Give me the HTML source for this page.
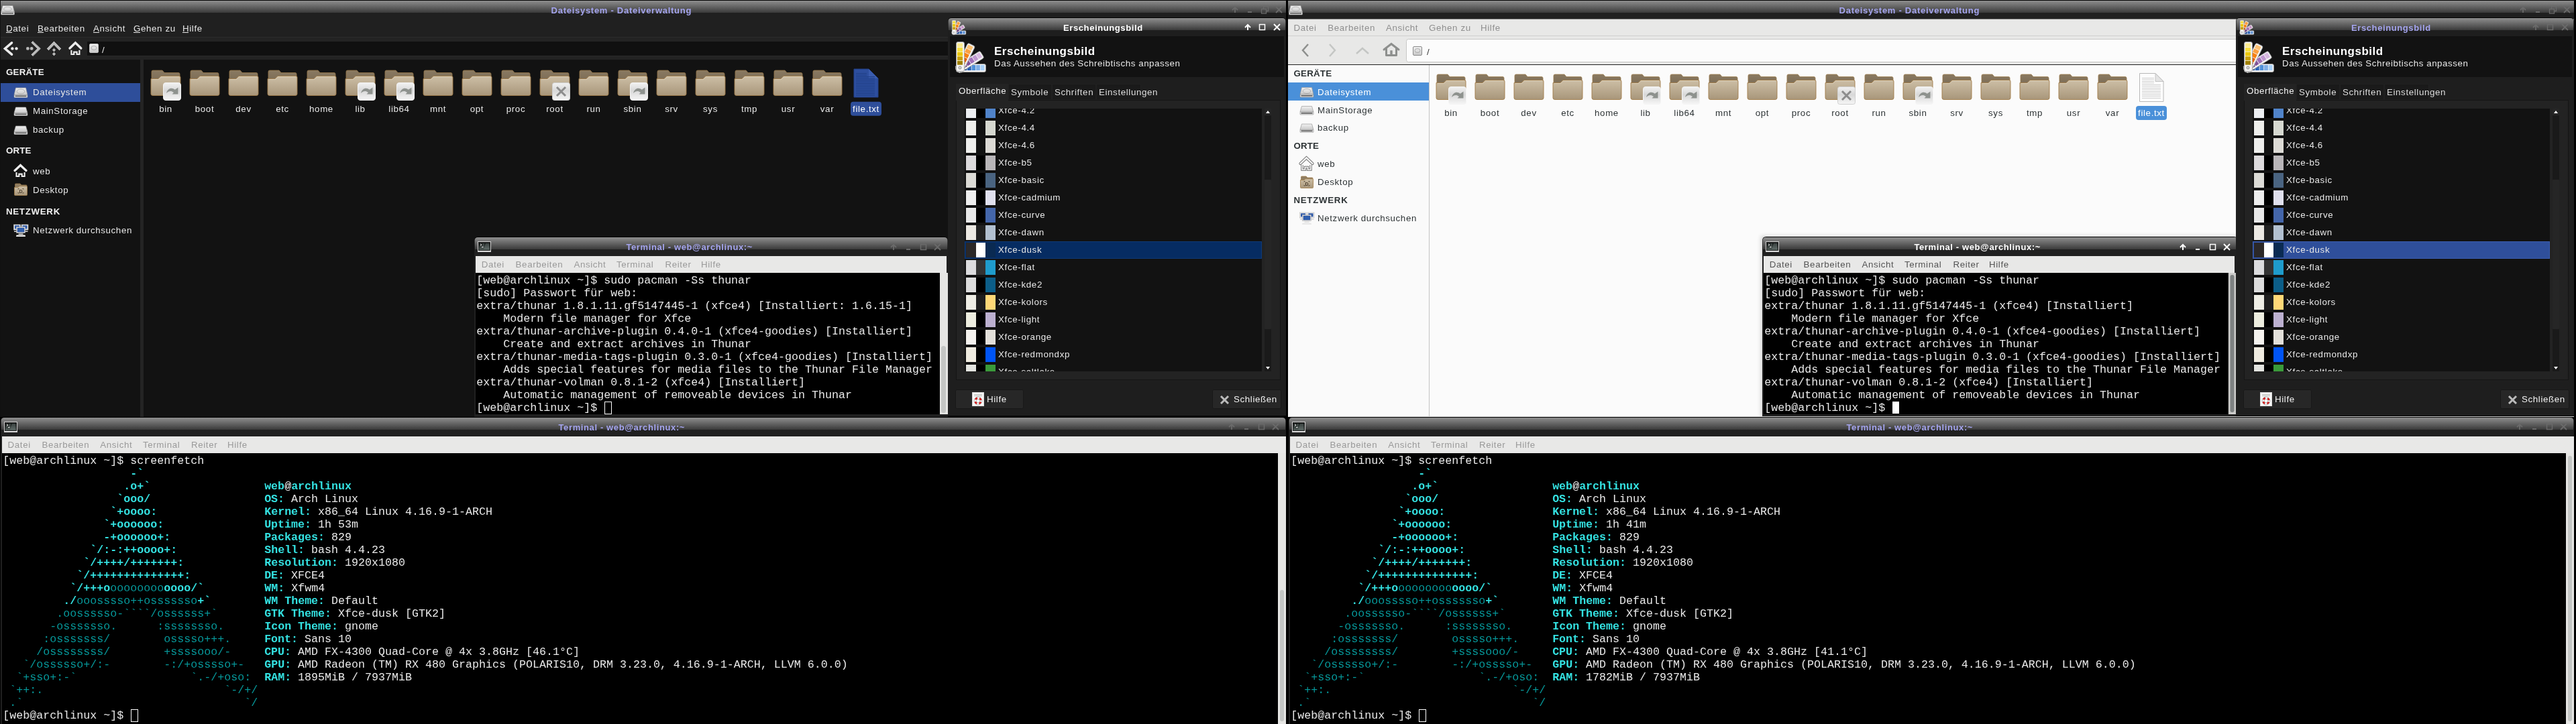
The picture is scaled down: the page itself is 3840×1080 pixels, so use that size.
<!DOCTYPE html><html><head><meta charset="utf-8"><style>html,body{margin:0;padding:0;background:#000;width:3840px;height:1080px;overflow:hidden}svg{will-change:transform}</style></head><body><svg width="3840" height="1080" viewBox="0 0 3840 1080" style="display:block"><defs><linearGradient id="tg" x1="0" y1="0" x2="0" y2="1"><stop offset="0" stop-color="#8e8e8e"/><stop offset="1" stop-color="#3a3a3a"/></linearGradient><linearGradient id="fold" x1="0" y1="0" x2="0" y2="1"><stop offset="0" stop-color="#cdbfa6"/><stop offset="1" stop-color="#a8967a"/></linearGradient><linearGradient id="foldtab" x1="0" y1="0" x2="0" y2="1"><stop offset="0" stop-color="#8a7a62"/><stop offset="1" stop-color="#6e5e48"/></linearGradient><linearGradient id="emb" x1="0" y1="0" x2="0" y2="1"><stop offset="0" stop-color="#f2f2f2"/><stop offset="0.45" stop-color="#d8d8d8"/><stop offset="1" stop-color="#f6f6f6"/></linearGradient><linearGradient id="drive" x1="0" y1="0" x2="0" y2="1"><stop offset="0" stop-color="#f0f0f0"/><stop offset="1" stop-color="#b8b8b8"/></linearGradient><linearGradient id="termicon" x1="0" y1="0" x2="0" y2="1"><stop offset="0" stop-color="#101312"/><stop offset="1" stop-color="#56625e"/></linearGradient><pattern id="chk" x="0" y="0" width="2" height="2" patternUnits="userSpaceOnUse"><rect x="0" y="0" width="1" height="1" fill="#ececec"/><rect x="1" y="1" width="1" height="1" fill="#ececec"/><rect x="1" y="0" width="1" height="1" fill="#8a8a8a"/><rect x="0" y="1" width="1" height="1" fill="#8a8a8a"/></pattern><linearGradient id="drv2" x1="0" y1="0" x2="0" y2="1"><stop offset="0" stop-color="#f2f2f2"/><stop offset="1" stop-color="#c8c8c8"/></linearGradient><filter id="blur" x="-5%" y="-5%" width="110%" height="110%"><feGaussianBlur stdDeviation="3"/></filter></defs><rect x="0" y="0" width="1917" height="622" fill="#202020" /><rect x="0" y="0" width="1917" height="1" fill="#000" /><rect x="0" y="1" width="1917" height="18" fill="url(#tg)" /><text x="821.6" y="20" font-family="Liberation Sans" font-size="13" font-weight="bold" fill="#a4a4ee" letter-spacing="0.72" text-anchor="start" >Dateisystem - Dateiverwaltung</text><path d="M4,8.5 H19 L21.5,18 H1.5 Z" fill="url(#drv2)" stroke="#9a9a9a" stroke-width="0.7"/><rect x="1.5" y="18" width="20" height="4" rx="0.8" fill="#e8e8e8" stroke="#8a8a8a" stroke-width="0.6"/><rect x="3" y="19.2" width="17" height="1.3" fill="#3a3a3a" /><ellipse cx="11.5" cy="13.5" rx="5.880000000000001" ry="3.2" fill="none" stroke="#a8a8a8" stroke-width="0.8"/><path d="M1841,19 V11 M1837,15 L1841,11 L1845,15" stroke="#6a6a6a" stroke-width="1.8" fill="none"/><rect x="1860" y="17" width="6" height="2" fill="#6a6a6a" /><path d="M1883.5,13 V9.5 H1890.5 V16.5 H1888" stroke="#6a6a6a" stroke-width="1.3" fill="none"/><rect x="1880.5" y="13.5" width="7" height="6.5" stroke="#6a6a6a" stroke-width="1.3" fill="none"/><path d="M1902,10 L1911,19 M1911,10 L1902,19" stroke="#6a6a6a" stroke-width="1.8" fill="none"/><text x="9" y="46.5" font-family="Liberation Sans" font-size="13.33" font-weight="normal" fill="#e6e6e6" letter-spacing="0.62" text-anchor="start" >Datei</text><text x="56" y="46.5" font-family="Liberation Sans" font-size="13.33" font-weight="normal" fill="#e6e6e6" letter-spacing="0.62" text-anchor="start" >Bearbeiten</text><text x="139" y="46.5" font-family="Liberation Sans" font-size="13.33" font-weight="normal" fill="#e6e6e6" letter-spacing="0.62" text-anchor="start" >Ansicht</text><text x="199" y="46.5" font-family="Liberation Sans" font-size="13.33" font-weight="normal" fill="#e6e6e6" letter-spacing="0.62" text-anchor="start" >Gehen zu</text><text x="272" y="46.5" font-family="Liberation Sans" font-size="13.33" font-weight="normal" fill="#e6e6e6" letter-spacing="0.62" text-anchor="start" >Hilfe</text><rect x="9" y="48" width="9" height="1" fill="#e6e6e6" /><rect x="56" y="48" width="9" height="1" fill="#e6e6e6" /><rect x="139" y="48" width="9" height="1" fill="#e6e6e6" /><rect x="199" y="48" width="10" height="1" fill="#e6e6e6" /><rect x="272" y="48" width="9" height="1" fill="#e6e6e6" /><rect x="0" y="55" width="1917" height="1.5" fill="#2b2b2b" /><rect x="0" y="56.5" width="1917" height="32.5" fill="#232323" /><rect x="130" y="62" width="1787" height="21" fill="#101010" /><rect x="130" y="83" width="1787" height="1" fill="#2a2a2a" /><path d="M17.5,63.8 L7.5,72.5 L17.5,81.2" stroke="#ececec" stroke-width="3.6" fill="none" stroke-linecap="round" stroke-linejoin="miter"/><circle cx="18.4" cy="72.4" r="2.2" fill="#ececec"/><circle cx="24.5" cy="72.4" r="2.2" fill="#ececec"/><path d="M49,63.8 L58,72.5 L49,81.2" stroke="url(#chk)" stroke-width="3.8" fill="none" stroke-linecap="square"/><circle cx="41.4" cy="72.4" r="2.4" fill="url(#chk)"/><circle cx="47.2" cy="72.4" r="2.4" fill="url(#chk)"/><path d="M72.5,72.5 L80.5,64.2 L88.5,72.5" stroke="url(#chk)" stroke-width="3.8" fill="none" stroke-linecap="square"/><path d="M80.5,72 L83,74.6 L80.5,77.2 L78,74.6 Z M80.5,78 L83,80.6 L80.5,83.2 L78,80.6 Z" fill="url(#chk)"/><path d="M104,72 L112.4,63.8 L120.8,72" stroke="#ececec" stroke-width="3.4" fill="none" stroke-linecap="round"/><path d="M106.4,74.8 V81 H110.2 V77.6 H114.6 V81 H118.4 V74.8" stroke="#ececec" stroke-width="2.2" fill="none"/><rect x="133.5" y="65.5" width="13" height="13" rx="1.5" fill="url(#drv2)" stroke="#bdbdbd"/><ellipse cx="140" cy="71.5" rx="4" ry="3" fill="none" stroke="#a0a0a0" stroke-width="0.8"/><text x="152" y="79" font-family="Liberation Sans" font-size="13.33" font-weight="normal" fill="#e6e6e6" letter-spacing="0" text-anchor="start" >/</text><rect x="1" y="89" width="208" height="533" fill="#121212" /><rect x="209" y="89" width="5" height="533" fill="#242424" /><rect x="214" y="89" width="1703" height="533" fill="#121212" /><rect x="0" y="0" width="1" height="622" fill="#111" /><text x="9" y="112" font-family="Liberation Sans" font-size="13.33" font-weight="bold" fill="#f0f0f0" letter-spacing="0.2" text-anchor="start" >GERÄTE</text><rect x="1" y="124" width="208" height="28" fill="#2e4e9a" /><path d="M23.5,131.0 H38.5 L41.0,141.5 H21.0 Z" fill="url(#drv2)" stroke="#9a9a9a" stroke-width="0.7"/><rect x="21.0" y="141.5" width="20" height="4" rx="0.8" fill="#e8e8e8" stroke="#8a8a8a" stroke-width="0.6"/><rect x="22.5" y="142.7" width="17" height="1.3" fill="#3a3a3a" /><ellipse cx="31.0" cy="136.5" rx="5.880000000000001" ry="3.52" fill="none" stroke="#a8a8a8" stroke-width="0.8"/><text x="49" y="142" font-family="Liberation Sans" font-size="13.33" font-weight="normal" fill="#e6e6e6" letter-spacing="0.62" text-anchor="start" >Dateisystem</text><path d="M23.5,160.0 H38.5 L41.0,168.5 H21.0 Z" fill="url(#drv2)" stroke="#9a9a9a" stroke-width="0.7"/><rect x="21.0" y="168.5" width="20" height="4" rx="0.8" fill="#e8e8e8" stroke="#8a8a8a" stroke-width="0.6"/><rect x="22.5" y="169.7" width="17" height="1.3" fill="#3a3a3a" /><text x="49" y="170" font-family="Liberation Sans" font-size="13.33" font-weight="normal" fill="#e6e6e6" letter-spacing="0.62" text-anchor="start" >MainStorage</text><path d="M23.5,188.0 H38.5 L41.0,196.5 H21.0 Z" fill="url(#drv2)" stroke="#9a9a9a" stroke-width="0.7"/><rect x="21.0" y="196.5" width="20" height="4" rx="0.8" fill="#e8e8e8" stroke="#8a8a8a" stroke-width="0.6"/><rect x="22.5" y="197.7" width="17" height="1.3" fill="#3a3a3a" /><text x="49" y="198" font-family="Liberation Sans" font-size="13.33" font-weight="normal" fill="#e6e6e6" letter-spacing="0.62" text-anchor="start" >backup</text><text x="9" y="229" font-family="Liberation Sans" font-size="13.33" font-weight="bold" fill="#f0f0f0" letter-spacing="0.1" text-anchor="start" >ORTE</text><text x="49" y="260" font-family="Liberation Sans" font-size="13.33" font-weight="normal" fill="#e6e6e6" letter-spacing="0.62" text-anchor="start" >web</text><text x="49" y="288" font-family="Liberation Sans" font-size="13.33" font-weight="normal" fill="#e6e6e6" letter-spacing="0.62" text-anchor="start" >Desktop</text><path d="M22,254.5 L30.5,246.5 L39,254.5" stroke="#eee" stroke-width="3.2" fill="none" stroke-linecap="round"/><path d="M24.5,257 V263 H28.3 V259.6 H32.7 V263 H36.6 V257" stroke="#eee" stroke-width="2.1" fill="none"/><path d="M22.5,275 Q22.5,274 23.5,274 H30 L32,276 H39 Q40,276 40,277 V286 H22.5 Z" fill="#8f7d62" stroke="#a07c48" stroke-width="0.7"/><path d="M21.5,279.5 H27 L29,277.8 H39.5 Q40.5,277.8 40.5,278.8 V290.5 Q40.5,291.5 39.5,291.5 H22.5 Q21.5,291.5 21.5,290.5 Z" fill="url(#fold)" stroke="#a07c48" stroke-width="0.8"/><path d="M27,282.5 V281.5 H28.5 M33.5,281.5 H35 V282.5 M35,287 V288 H33.5 M28.5,288 H27 V287" stroke="#4a3e2e" stroke-width="0.9" fill="none"/><text x="31" y="288" font-family="Liberation Sans" font-size="7" font-weight="bold" fill="#4a3e2e" text-anchor="middle">D</text><text x="9" y="320" font-family="Liberation Sans" font-size="13.33" font-weight="bold" fill="#f0f0f0" letter-spacing="0.68" text-anchor="start" >NETZWERK</text><text x="49" y="348" font-family="Liberation Sans" font-size="13.33" font-weight="normal" fill="#e6e6e6" letter-spacing="0.62" text-anchor="start" >Netzwerk durchsuchen</text><rect x="20.5" y="335.0" width="10" height="8" fill="#e8e8e8" stroke="#bbb" stroke-width="0.6"/><rect x="22.0" y="336.3" width="7" height="5" fill="#2c58a8"/><rect x="21.0" y="344.5" width="9" height="1.5" fill="#d8d8d8" /><rect x="32" y="335.0" width="10" height="8" fill="#e8e8e8" stroke="#bbb" stroke-width="0.6"/><rect x="33.5" y="336.3" width="7" height="5" fill="#2c58a8"/><rect x="32.5" y="344.5" width="9" height="1.5" fill="#d8d8d8" /><rect x="24.5" y="338.5" width="13" height="9" fill="#ececec" stroke="#aaa" stroke-width="0.6"/><rect x="26" y="340.0" width="10" height="6" fill="#3060b0" stroke="#1a3a80" stroke-width="0.5"/><rect x="27.5" y="348.5" width="7" height="1.5" fill="#e0e0e0" /><path d="M24.5,350.5 H37.5 L38,353.0 H24 Z" fill="#e8e8e8"/><path d="M226,107 Q226,105 228,105 H242 L245,108.5 H266 Q268,108.5 268,110.5 V135 H226 Z" fill="url(#foldtab)" stroke="#9a7a4a" stroke-width="0.8"/><path d="M225,117.5 H236 L240,113.5 H267 Q269,113.5 269,115.5 V140 Q269,142.5 266,142.5 H228 Q225,142.5 225,140 Z" fill="url(#fold)" stroke="#a07c48" stroke-width="0.9"/><path d="M227,118.5 H236.5 L240.5,114.5 H267" stroke="#e6dccb" stroke-width="0.8" fill="none" opacity="0.7"/><rect x="243.5" y="123.5" width="26" height="26" rx="3.5" fill="url(#emb)" stroke="#f4f4f4"/><path transform="translate(243,123)" d="M5,16 C6.5,9 13,6.5 17.8,10.8 L22.5,7.5 V17.5 H13.5 L16,15 C12,11.8 8.5,12.5 5,16 Z" fill="#8e928e"/><text x="247" y="166.7" font-family="Liberation Sans" font-size="13.33" font-weight="normal" fill="#e6e6e6" letter-spacing="0.62" text-anchor="middle" >bin</text><path d="M284,107 Q284,105 286,105 H300 L303,108.5 H324 Q326,108.5 326,110.5 V135 H284 Z" fill="url(#foldtab)" stroke="#9a7a4a" stroke-width="0.8"/><path d="M283,117.5 H294 L298,113.5 H325 Q327,113.5 327,115.5 V140 Q327,142.5 324,142.5 H286 Q283,142.5 283,140 Z" fill="url(#fold)" stroke="#a07c48" stroke-width="0.9"/><path d="M285,118.5 H294.5 L298.5,114.5 H325" stroke="#e6dccb" stroke-width="0.8" fill="none" opacity="0.7"/><text x="305" y="166.7" font-family="Liberation Sans" font-size="13.33" font-weight="normal" fill="#e6e6e6" letter-spacing="0.62" text-anchor="middle" >boot</text><path d="M342,107 Q342,105 344,105 H358 L361,108.5 H382 Q384,108.5 384,110.5 V135 H342 Z" fill="url(#foldtab)" stroke="#9a7a4a" stroke-width="0.8"/><path d="M341,117.5 H352 L356,113.5 H383 Q385,113.5 385,115.5 V140 Q385,142.5 382,142.5 H344 Q341,142.5 341,140 Z" fill="url(#fold)" stroke="#a07c48" stroke-width="0.9"/><path d="M343,118.5 H352.5 L356.5,114.5 H383" stroke="#e6dccb" stroke-width="0.8" fill="none" opacity="0.7"/><text x="363" y="166.7" font-family="Liberation Sans" font-size="13.33" font-weight="normal" fill="#e6e6e6" letter-spacing="0.62" text-anchor="middle" >dev</text><path d="M400,107 Q400,105 402,105 H416 L419,108.5 H440 Q442,108.5 442,110.5 V135 H400 Z" fill="url(#foldtab)" stroke="#9a7a4a" stroke-width="0.8"/><path d="M399,117.5 H410 L414,113.5 H441 Q443,113.5 443,115.5 V140 Q443,142.5 440,142.5 H402 Q399,142.5 399,140 Z" fill="url(#fold)" stroke="#a07c48" stroke-width="0.9"/><path d="M401,118.5 H410.5 L414.5,114.5 H441" stroke="#e6dccb" stroke-width="0.8" fill="none" opacity="0.7"/><text x="421" y="166.7" font-family="Liberation Sans" font-size="13.33" font-weight="normal" fill="#e6e6e6" letter-spacing="0.62" text-anchor="middle" >etc</text><path d="M458,107 Q458,105 460,105 H474 L477,108.5 H498 Q500,108.5 500,110.5 V135 H458 Z" fill="url(#foldtab)" stroke="#9a7a4a" stroke-width="0.8"/><path d="M457,117.5 H468 L472,113.5 H499 Q501,113.5 501,115.5 V140 Q501,142.5 498,142.5 H460 Q457,142.5 457,140 Z" fill="url(#fold)" stroke="#a07c48" stroke-width="0.9"/><path d="M459,118.5 H468.5 L472.5,114.5 H499" stroke="#e6dccb" stroke-width="0.8" fill="none" opacity="0.7"/><text x="479" y="166.7" font-family="Liberation Sans" font-size="13.33" font-weight="normal" fill="#e6e6e6" letter-spacing="0.62" text-anchor="middle" >home</text><path d="M516,107 Q516,105 518,105 H532 L535,108.5 H556 Q558,108.5 558,110.5 V135 H516 Z" fill="url(#foldtab)" stroke="#9a7a4a" stroke-width="0.8"/><path d="M515,117.5 H526 L530,113.5 H557 Q559,113.5 559,115.5 V140 Q559,142.5 556,142.5 H518 Q515,142.5 515,140 Z" fill="url(#fold)" stroke="#a07c48" stroke-width="0.9"/><path d="M517,118.5 H526.5 L530.5,114.5 H557" stroke="#e6dccb" stroke-width="0.8" fill="none" opacity="0.7"/><rect x="533.5" y="123.5" width="26" height="26" rx="3.5" fill="url(#emb)" stroke="#f4f4f4"/><path transform="translate(533,123)" d="M5,16 C6.5,9 13,6.5 17.8,10.8 L22.5,7.5 V17.5 H13.5 L16,15 C12,11.8 8.5,12.5 5,16 Z" fill="#8e928e"/><text x="537" y="166.7" font-family="Liberation Sans" font-size="13.33" font-weight="normal" fill="#e6e6e6" letter-spacing="0.62" text-anchor="middle" >lib</text><path d="M574,107 Q574,105 576,105 H590 L593,108.5 H614 Q616,108.5 616,110.5 V135 H574 Z" fill="url(#foldtab)" stroke="#9a7a4a" stroke-width="0.8"/><path d="M573,117.5 H584 L588,113.5 H615 Q617,113.5 617,115.5 V140 Q617,142.5 614,142.5 H576 Q573,142.5 573,140 Z" fill="url(#fold)" stroke="#a07c48" stroke-width="0.9"/><path d="M575,118.5 H584.5 L588.5,114.5 H615" stroke="#e6dccb" stroke-width="0.8" fill="none" opacity="0.7"/><rect x="591.5" y="123.5" width="26" height="26" rx="3.5" fill="url(#emb)" stroke="#f4f4f4"/><path transform="translate(591,123)" d="M5,16 C6.5,9 13,6.5 17.8,10.8 L22.5,7.5 V17.5 H13.5 L16,15 C12,11.8 8.5,12.5 5,16 Z" fill="#8e928e"/><text x="595" y="166.7" font-family="Liberation Sans" font-size="13.33" font-weight="normal" fill="#e6e6e6" letter-spacing="0.62" text-anchor="middle" >lib64</text><path d="M632,107 Q632,105 634,105 H648 L651,108.5 H672 Q674,108.5 674,110.5 V135 H632 Z" fill="url(#foldtab)" stroke="#9a7a4a" stroke-width="0.8"/><path d="M631,117.5 H642 L646,113.5 H673 Q675,113.5 675,115.5 V140 Q675,142.5 672,142.5 H634 Q631,142.5 631,140 Z" fill="url(#fold)" stroke="#a07c48" stroke-width="0.9"/><path d="M633,118.5 H642.5 L646.5,114.5 H673" stroke="#e6dccb" stroke-width="0.8" fill="none" opacity="0.7"/><text x="653" y="166.7" font-family="Liberation Sans" font-size="13.33" font-weight="normal" fill="#e6e6e6" letter-spacing="0.62" text-anchor="middle" >mnt</text><path d="M690,107 Q690,105 692,105 H706 L709,108.5 H730 Q732,108.5 732,110.5 V135 H690 Z" fill="url(#foldtab)" stroke="#9a7a4a" stroke-width="0.8"/><path d="M689,117.5 H700 L704,113.5 H731 Q733,113.5 733,115.5 V140 Q733,142.5 730,142.5 H692 Q689,142.5 689,140 Z" fill="url(#fold)" stroke="#a07c48" stroke-width="0.9"/><path d="M691,118.5 H700.5 L704.5,114.5 H731" stroke="#e6dccb" stroke-width="0.8" fill="none" opacity="0.7"/><text x="711" y="166.7" font-family="Liberation Sans" font-size="13.33" font-weight="normal" fill="#e6e6e6" letter-spacing="0.62" text-anchor="middle" >opt</text><path d="M748,107 Q748,105 750,105 H764 L767,108.5 H788 Q790,108.5 790,110.5 V135 H748 Z" fill="url(#foldtab)" stroke="#9a7a4a" stroke-width="0.8"/><path d="M747,117.5 H758 L762,113.5 H789 Q791,113.5 791,115.5 V140 Q791,142.5 788,142.5 H750 Q747,142.5 747,140 Z" fill="url(#fold)" stroke="#a07c48" stroke-width="0.9"/><path d="M749,118.5 H758.5 L762.5,114.5 H789" stroke="#e6dccb" stroke-width="0.8" fill="none" opacity="0.7"/><text x="769" y="166.7" font-family="Liberation Sans" font-size="13.33" font-weight="normal" fill="#e6e6e6" letter-spacing="0.62" text-anchor="middle" >proc</text><path d="M806,107 Q806,105 808,105 H822 L825,108.5 H846 Q848,108.5 848,110.5 V135 H806 Z" fill="url(#foldtab)" stroke="#9a7a4a" stroke-width="0.8"/><path d="M805,117.5 H816 L820,113.5 H847 Q849,113.5 849,115.5 V140 Q849,142.5 846,142.5 H808 Q805,142.5 805,140 Z" fill="url(#fold)" stroke="#a07c48" stroke-width="0.9"/><path d="M807,118.5 H816.5 L820.5,114.5 H847" stroke="#e6dccb" stroke-width="0.8" fill="none" opacity="0.7"/><rect x="823.5" y="123.5" width="26" height="26" rx="3" fill="url(#emb)" stroke="#cfcfcf"/><path d="M830,130 L843,143 M843,130 L830,143" stroke="#8c8c8c" stroke-width="3"/><text x="827" y="166.7" font-family="Liberation Sans" font-size="13.33" font-weight="normal" fill="#e6e6e6" letter-spacing="0.62" text-anchor="middle" >root</text><path d="M864,107 Q864,105 866,105 H880 L883,108.5 H904 Q906,108.5 906,110.5 V135 H864 Z" fill="url(#foldtab)" stroke="#9a7a4a" stroke-width="0.8"/><path d="M863,117.5 H874 L878,113.5 H905 Q907,113.5 907,115.5 V140 Q907,142.5 904,142.5 H866 Q863,142.5 863,140 Z" fill="url(#fold)" stroke="#a07c48" stroke-width="0.9"/><path d="M865,118.5 H874.5 L878.5,114.5 H905" stroke="#e6dccb" stroke-width="0.8" fill="none" opacity="0.7"/><text x="885" y="166.7" font-family="Liberation Sans" font-size="13.33" font-weight="normal" fill="#e6e6e6" letter-spacing="0.62" text-anchor="middle" >run</text><path d="M922,107 Q922,105 924,105 H938 L941,108.5 H962 Q964,108.5 964,110.5 V135 H922 Z" fill="url(#foldtab)" stroke="#9a7a4a" stroke-width="0.8"/><path d="M921,117.5 H932 L936,113.5 H963 Q965,113.5 965,115.5 V140 Q965,142.5 962,142.5 H924 Q921,142.5 921,140 Z" fill="url(#fold)" stroke="#a07c48" stroke-width="0.9"/><path d="M923,118.5 H932.5 L936.5,114.5 H963" stroke="#e6dccb" stroke-width="0.8" fill="none" opacity="0.7"/><rect x="939.5" y="123.5" width="26" height="26" rx="3.5" fill="url(#emb)" stroke="#f4f4f4"/><path transform="translate(939,123)" d="M5,16 C6.5,9 13,6.5 17.8,10.8 L22.5,7.5 V17.5 H13.5 L16,15 C12,11.8 8.5,12.5 5,16 Z" fill="#8e928e"/><text x="943" y="166.7" font-family="Liberation Sans" font-size="13.33" font-weight="normal" fill="#e6e6e6" letter-spacing="0.62" text-anchor="middle" >sbin</text><path d="M980,107 Q980,105 982,105 H996 L999,108.5 H1020 Q1022,108.5 1022,110.5 V135 H980 Z" fill="url(#foldtab)" stroke="#9a7a4a" stroke-width="0.8"/><path d="M979,117.5 H990 L994,113.5 H1021 Q1023,113.5 1023,115.5 V140 Q1023,142.5 1020,142.5 H982 Q979,142.5 979,140 Z" fill="url(#fold)" stroke="#a07c48" stroke-width="0.9"/><path d="M981,118.5 H990.5 L994.5,114.5 H1021" stroke="#e6dccb" stroke-width="0.8" fill="none" opacity="0.7"/><text x="1001" y="166.7" font-family="Liberation Sans" font-size="13.33" font-weight="normal" fill="#e6e6e6" letter-spacing="0.62" text-anchor="middle" >srv</text><path d="M1038,107 Q1038,105 1040,105 H1054 L1057,108.5 H1078 Q1080,108.5 1080,110.5 V135 H1038 Z" fill="url(#foldtab)" stroke="#9a7a4a" stroke-width="0.8"/><path d="M1037,117.5 H1048 L1052,113.5 H1079 Q1081,113.5 1081,115.5 V140 Q1081,142.5 1078,142.5 H1040 Q1037,142.5 1037,140 Z" fill="url(#fold)" stroke="#a07c48" stroke-width="0.9"/><path d="M1039,118.5 H1048.5 L1052.5,114.5 H1079" stroke="#e6dccb" stroke-width="0.8" fill="none" opacity="0.7"/><text x="1059" y="166.7" font-family="Liberation Sans" font-size="13.33" font-weight="normal" fill="#e6e6e6" letter-spacing="0.62" text-anchor="middle" >sys</text><path d="M1096,107 Q1096,105 1098,105 H1112 L1115,108.5 H1136 Q1138,108.5 1138,110.5 V135 H1096 Z" fill="url(#foldtab)" stroke="#9a7a4a" stroke-width="0.8"/><path d="M1095,117.5 H1106 L1110,113.5 H1137 Q1139,113.5 1139,115.5 V140 Q1139,142.5 1136,142.5 H1098 Q1095,142.5 1095,140 Z" fill="url(#fold)" stroke="#a07c48" stroke-width="0.9"/><path d="M1097,118.5 H1106.5 L1110.5,114.5 H1137" stroke="#e6dccb" stroke-width="0.8" fill="none" opacity="0.7"/><text x="1117" y="166.7" font-family="Liberation Sans" font-size="13.33" font-weight="normal" fill="#e6e6e6" letter-spacing="0.62" text-anchor="middle" >tmp</text><path d="M1154,107 Q1154,105 1156,105 H1170 L1173,108.5 H1194 Q1196,108.5 1196,110.5 V135 H1154 Z" fill="url(#foldtab)" stroke="#9a7a4a" stroke-width="0.8"/><path d="M1153,117.5 H1164 L1168,113.5 H1195 Q1197,113.5 1197,115.5 V140 Q1197,142.5 1194,142.5 H1156 Q1153,142.5 1153,140 Z" fill="url(#fold)" stroke="#a07c48" stroke-width="0.9"/><path d="M1155,118.5 H1164.5 L1168.5,114.5 H1195" stroke="#e6dccb" stroke-width="0.8" fill="none" opacity="0.7"/><text x="1175" y="166.7" font-family="Liberation Sans" font-size="13.33" font-weight="normal" fill="#e6e6e6" letter-spacing="0.62" text-anchor="middle" >usr</text><path d="M1212,107 Q1212,105 1214,105 H1228 L1231,108.5 H1252 Q1254,108.5 1254,110.5 V135 H1212 Z" fill="url(#foldtab)" stroke="#9a7a4a" stroke-width="0.8"/><path d="M1211,117.5 H1222 L1226,113.5 H1253 Q1255,113.5 1255,115.5 V140 Q1255,142.5 1252,142.5 H1214 Q1211,142.5 1211,140 Z" fill="url(#fold)" stroke="#a07c48" stroke-width="0.9"/><path d="M1213,118.5 H1222.5 L1226.5,114.5 H1253" stroke="#e6dccb" stroke-width="0.8" fill="none" opacity="0.7"/><text x="1233" y="166.7" font-family="Liberation Sans" font-size="13.33" font-weight="normal" fill="#e6e6e6" letter-spacing="0.62" text-anchor="middle" >var</text><path d="M1273,103 H1295 L1309,117 V145 H1273 Z" fill="#2d4e9e" stroke="#23408a"/><path d="M1295,103 V117 H1309 Z" fill="#3a5cae"/><rect x="1276" y="109.0" width="16" height="1" fill="#1f3f86" /><rect x="1276" y="111.5" width="16" height="1" fill="#1f3f86" /><rect x="1276" y="114.0" width="28" height="1" fill="#1f3f86" /><rect x="1276" y="116.5" width="28" height="1" fill="#1f3f86" /><rect x="1276" y="119.0" width="28" height="1" fill="#1f3f86" /><rect x="1276" y="121.5" width="28" height="1" fill="#1f3f86" /><rect x="1276" y="124.0" width="28" height="1" fill="#1f3f86" /><rect x="1276" y="126.5" width="28" height="1" fill="#1f3f86" /><rect x="1276" y="129.0" width="28" height="1" fill="#1f3f86" /><rect x="1276" y="131.5" width="28" height="1" fill="#1f3f86" /><rect x="1276" y="134.0" width="28" height="1" fill="#1f3f86" /><rect x="1276" y="136.5" width="28" height="1" fill="#1f3f86" /><rect x="1276" y="139.0" width="28" height="1" fill="#1f3f86" /><rect x="1276" y="141.5" width="28" height="1" fill="#1f3f86" /><rect x="1268" y="151.7" width="46" height="21" rx="4" fill="#2e4e9a"/><text x="1291" y="166.7" font-family="Liberation Sans" font-size="13.33" font-weight="normal" fill="#ffffff" letter-spacing="0.62" text-anchor="middle" >file.txt</text><path d="M707,622 V359 Q707,353 713,353 H1407 Q1413,353 1413,359 V622 Z" fill="#000"/><path d="M707,622 V372 H1413 V622 Z" fill="#202020"/><path d="M707.5,372 V359 Q707.5,354 712.5,354 H1407.5 Q1412.5,354 1412.5,359 V372 Z" fill="url(#tg)"/><rect x="712.5" y="360.5" width="19" height="15" fill="#e8e8e8" stroke="#cfcfcf" stroke-width="1"/><rect x="713.5" y="361.5" width="17" height="12" fill="url(#termicon)" stroke="#050505" stroke-width="0.8"/><path d="M719.5,363 H722 L721,368 H719 Z M724,363 H729 V372 H721 Z" fill="#7a8a86" opacity="0.35"/><path d="M716,363.8 L718,365.2 L716,366.6" stroke="#fff" stroke-width="0.9" fill="none"/><rect x="718" y="368" width="2.6" height="1.2" fill="#e0e0e0" /><text x="933.4" y="373" font-family="Liberation Sans" font-size="13" font-weight="bold" fill="#a4a4ee" letter-spacing="0.62" text-anchor="start" >Terminal - web@archlinux:~</text><path d="M1332,373 V365 M1328,369 L1332,365 L1336,369" stroke="#6a6a6a" stroke-width="1.8" fill="none"/><rect x="1351" y="371" width="6" height="2" fill="#6a6a6a" /><rect x="1372.5" y="364.5" width="8" height="8" stroke="#6a6a6a" stroke-width="1.5" fill="none"/><path d="M1393,364 L1402,373 M1402,364 L1393,373" stroke="#6a6a6a" stroke-width="1.8" fill="none"/><rect x="709" y="382" width="702" height="25" fill="#e8e8e7" /><text x="717.7" y="399" font-family="Liberation Sans" font-size="13.33" font-weight="normal" fill="#9a9a9a" letter-spacing="0.62" text-anchor="start" >Datei</text><text x="768.6" y="399" font-family="Liberation Sans" font-size="13.33" font-weight="normal" fill="#9a9a9a" letter-spacing="0.62" text-anchor="start" >Bearbeiten</text><text x="855.4" y="399" font-family="Liberation Sans" font-size="13.33" font-weight="normal" fill="#9a9a9a" letter-spacing="0.62" text-anchor="start" >Ansicht</text><text x="919" y="399" font-family="Liberation Sans" font-size="13.33" font-weight="normal" fill="#9a9a9a" letter-spacing="0.62" text-anchor="start" >Terminal</text><text x="991.4" y="399" font-family="Liberation Sans" font-size="13.33" font-weight="normal" fill="#9a9a9a" letter-spacing="0.62" text-anchor="start" >Reiter</text><text x="1045" y="399" font-family="Liberation Sans" font-size="13.33" font-weight="normal" fill="#9a9a9a" letter-spacing="0.62" text-anchor="start" >Hilfe</text><rect x="709" y="407" width="692" height="211" fill="#000" /><rect x="1401" y="407" width="12" height="211" fill="#e6e6e4" /><rect x="1403" y="516" width="7" height="100" fill="#c4c6c4" rx="3.5"/><text x="710.3" y="423" font-family="Liberation Mono" font-size="16.667" style="white-space:pre" xml:space="preserve"><tspan fill="#e8e8e8" font-weight="normal">[web@archlinux ~]$ sudo pacman -Ss thunar</tspan></text><text x="710.3" y="442" font-family="Liberation Mono" font-size="16.667" style="white-space:pre" xml:space="preserve"><tspan fill="#e8e8e8" font-weight="normal">[sudo] Passwort für web:</tspan></text><text x="710.3" y="461" font-family="Liberation Mono" font-size="16.667" style="white-space:pre" xml:space="preserve"><tspan fill="#e8e8e8" font-weight="normal">extra/thunar 1.8.1.11.gf5147445-1 (xfce4) [Installiert: 1.6.15-1]</tspan></text><text x="710.3" y="480" font-family="Liberation Mono" font-size="16.667" style="white-space:pre" xml:space="preserve"><tspan fill="#e8e8e8" font-weight="normal">    Modern file manager for Xfce</tspan></text><text x="710.3" y="499" font-family="Liberation Mono" font-size="16.667" style="white-space:pre" xml:space="preserve"><tspan fill="#e8e8e8" font-weight="normal">extra/thunar-archive-plugin 0.4.0-1 (xfce4-goodies) [Installiert]</tspan></text><text x="710.3" y="518" font-family="Liberation Mono" font-size="16.667" style="white-space:pre" xml:space="preserve"><tspan fill="#e8e8e8" font-weight="normal">    Create and extract archives in Thunar</tspan></text><text x="710.3" y="537" font-family="Liberation Mono" font-size="16.667" style="white-space:pre" xml:space="preserve"><tspan fill="#e8e8e8" font-weight="normal">extra/thunar-media-tags-plugin 0.3.0-1 (xfce4-goodies) [Installiert]</tspan></text><text x="710.3" y="556" font-family="Liberation Mono" font-size="16.667" style="white-space:pre" xml:space="preserve"><tspan fill="#e8e8e8" font-weight="normal">    Adds special features for media files to the Thunar File Manager</tspan></text><text x="710.3" y="575" font-family="Liberation Mono" font-size="16.667" style="white-space:pre" xml:space="preserve"><tspan fill="#e8e8e8" font-weight="normal">extra/thunar-volman 0.8.1-2 (xfce4) [Installiert]</tspan></text><text x="710.3" y="594" font-family="Liberation Mono" font-size="16.667" style="white-space:pre" xml:space="preserve"><tspan fill="#e8e8e8" font-weight="normal">    Automatic management of removeable devices in Thunar</tspan></text><text x="710.3" y="613" font-family="Liberation Mono" font-size="16.667" style="white-space:pre" xml:space="preserve"><tspan fill="#e8e8e8" font-weight="normal">[web@archlinux ~]$ </tspan></text><rect x="901.5" y="599.5" width="10" height="18" fill="none" stroke="#fff"/><path d="M1413,620 V32 Q1413,26 1419,26 H1911 Q1917,26 1917,32 V620 Z" fill="#000"/><path d="M1413,620 V45 H1917 V620 Z" fill="#1e1e1e"/><path d="M1413.5,45 V32 Q1413.5,27 1418.5,27 H1911.5 Q1916.5,27 1916.5,32 V45 Z" fill="url(#tg)"/><rect x="1413" y="620" width="504" height="2" fill="#000" /><text x="1585" y="46" font-family="Liberation Sans" font-size="13" font-weight="bold" fill="#ffffff" letter-spacing="0.6" text-anchor="start" >Erscheinungsbild</text><g transform="translate(1419,30) scale(0.47)"><g transform="rotate(90 6 39)"><rect x="0.5" y="0.5" width="12" height="44" rx="2.5" fill="#f4f4f4" stroke="#9a9a9a" stroke-width="0.8"/><rect x="2.2" y="3.0" width="8.6" height="8" fill="#6a9ad8"/><rect x="2.2" y="12.5" width="8.6" height="8" fill="#2c64b8"/><rect x="2.2" y="22.0" width="8.6" height="8" fill="#1c4890"/></g><g transform="rotate(58 6 39)"><rect x="0.5" y="0.5" width="12" height="44" rx="2.5" fill="#f4f4f4" stroke="#9a9a9a" stroke-width="0.8"/><rect x="2.2" y="3.0" width="8.6" height="8" fill="#c898c8"/><rect x="2.2" y="12.5" width="8.6" height="8" fill="#a070b8"/><rect x="2.2" y="22.0" width="8.6" height="8" fill="#603078"/></g><g transform="rotate(26 6 39)"><rect x="0.5" y="0.5" width="12" height="44" rx="2.5" fill="#f4f4f4" stroke="#9a9a9a" stroke-width="0.8"/><rect x="2.2" y="3.0" width="8.6" height="8" fill="#fca040"/><rect x="2.2" y="12.5" width="8.6" height="8" fill="#f88010"/><rect x="2.2" y="22.0" width="8.6" height="8" fill="#c05000"/></g><g transform="rotate(0 6 39)"><rect x="0.5" y="0.5" width="12" height="44" rx="2.5" fill="#f4f4f4" stroke="#9a9a9a" stroke-width="0.8"/><rect x="2.2" y="3.0" width="8.6" height="8" fill="#f8e040"/><rect x="2.2" y="12.5" width="8.6" height="8" fill="#ecc800"/><rect x="2.2" y="22.0" width="8.6" height="8" fill="#c8a000"/></g><circle cx="6" cy="39" r="2" fill="#ddd" stroke="#777" stroke-width="0.8"/></g><path d="M1860,45 V37 M1856,41 L1860,37 L1864,41" stroke="#ffffff" stroke-width="2" fill="none"/><rect x="1877.5" y="36.5" width="8" height="8" stroke="#ffffff" stroke-width="1.5" fill="none"/><path d="M1899,36 L1908,45 M1908,36 L1899,45" stroke="#ffffff" stroke-width="2" fill="none"/><rect x="1416" y="54" width="498" height="61" fill="#121212" /><g transform="translate(1425,62) scale(1.0)"><g transform="rotate(90 6 39)"><rect x="0.5" y="0.5" width="12" height="44" rx="2.5" fill="#f4f4f4" stroke="#9a9a9a" stroke-width="0.8"/><rect x="2" y="2.5" width="8" height="5.8" fill="#a8d0f8"/><rect x="2" y="9.1" width="8" height="5.8" fill="#80b0e8"/><rect x="2" y="15.7" width="8" height="5.8" fill="#5090d8"/><rect x="2" y="22.299999999999997" width="8" height="5.8" fill="#2c64b8"/><rect x="2" y="28.9" width="8" height="5.8" fill="#1c4890"/></g><g transform="rotate(58 6 39)"><rect x="0.5" y="0.5" width="12" height="44" rx="2.5" fill="#f4f4f4" stroke="#9a9a9a" stroke-width="0.8"/><rect x="2" y="2.5" width="8" height="5.8" fill="#d8b8e0"/><rect x="2" y="9.1" width="8" height="5.8" fill="#c098d0"/><rect x="2" y="15.7" width="8" height="5.8" fill="#a070b8"/><rect x="2" y="22.299999999999997" width="8" height="5.8" fill="#805098"/><rect x="2" y="28.9" width="8" height="5.8" fill="#603078"/></g><g transform="rotate(26 6 39)"><rect x="0.5" y="0.5" width="12" height="44" rx="2.5" fill="#f4f4f4" stroke="#9a9a9a" stroke-width="0.8"/><rect x="2" y="2.5" width="8" height="5.8" fill="#fcc070"/><rect x="2" y="9.1" width="8" height="5.8" fill="#fca040"/><rect x="2" y="15.7" width="8" height="5.8" fill="#f88010"/><rect x="2" y="22.299999999999997" width="8" height="5.8" fill="#e06000"/><rect x="2" y="28.9" width="8" height="5.8" fill="#c05000"/></g><g transform="rotate(0 6 39)"><rect x="0.5" y="0.5" width="12" height="44" rx="2.5" fill="#f4f4f4" stroke="#9a9a9a" stroke-width="0.8"/><rect x="2" y="2.5" width="8" height="5.8" fill="#fdec90"/><rect x="2" y="9.1" width="8" height="5.8" fill="#f8e040"/><rect x="2" y="15.7" width="8" height="5.8" fill="#ecc800"/><rect x="2" y="22.299999999999997" width="8" height="5.8" fill="#c8a000"/><rect x="2" y="28.9" width="8" height="5.8" fill="#a08000"/></g><circle cx="6" cy="39" r="2" fill="#ddd" stroke="#777" stroke-width="0.8"/></g><text x="1482" y="82" font-family="Liberation Sans" font-size="17" font-weight="bold" fill="#ffffff" letter-spacing="0.5" text-anchor="start" >Erscheinungsbild</text><text x="1482" y="99" font-family="Liberation Sans" font-size="13.33" font-weight="normal" fill="#e6e6e6" letter-spacing="0.56" text-anchor="start" >Das Aussehen des Schreibtischs anpassen</text><rect x="1425.5" y="149.5" width="483" height="417" fill="#232323" stroke="#151515"/><rect x="1425" y="125" width="78" height="25" fill="#232323"/><rect x="1503.5" y="125.5" width="64" height="23" fill="#1a1a1a" stroke="#202020"/><rect x="1568.5" y="125.5" width="65" height="23" fill="#1a1a1a" stroke="#202020"/><rect x="1634.5" y="125.5" width="66" height="23" fill="#1a1a1a" stroke="#202020"/><text x="1429" y="140" font-family="Liberation Sans" font-size="13.33" font-weight="normal" fill="#f0f0f0" letter-spacing="0.62" text-anchor="start" >Oberfläche</text><text x="1507" y="142" font-family="Liberation Sans" font-size="13.33" font-weight="normal" fill="#dddddd" letter-spacing="0.62" text-anchor="start" >Symbole</text><text x="1572" y="142" font-family="Liberation Sans" font-size="13.33" font-weight="normal" fill="#dddddd" letter-spacing="0.62" text-anchor="start" >Schriften</text><text x="1638" y="142" font-family="Liberation Sans" font-size="13.33" font-weight="normal" fill="#dddddd" letter-spacing="0.62" text-anchor="start" >Einstellungen</text><svg x="1438" y="162" width="443" height="392" overflow="hidden"><rect x="0" y="0" width="443" height="392" fill="#121212" /><rect x="2" y="-8" width="15" height="22" fill="#eceef2" /><rect x="17" y="-8" width="14" height="22" fill="#000000" /><rect x="31" y="-8" width="15" height="22" fill="#5083c9" /><text x="50" y="7" font-family="Liberation Sans" font-size="13.33" font-weight="normal" fill="#e6e6e6" letter-spacing="0.66" text-anchor="start" >Xfce-4.2</text><rect x="2" y="18" width="15" height="22" fill="#efefec" /><rect x="17" y="18" width="14" height="22" fill="#111111" /><rect x="31" y="18" width="15" height="22" fill="#d6d8d0" /><text x="50" y="33" font-family="Liberation Sans" font-size="13.33" font-weight="normal" fill="#e6e6e6" letter-spacing="0.66" text-anchor="start" >Xfce-4.4</text><rect x="2" y="44" width="15" height="22" fill="#efefed" /><rect x="17" y="44" width="14" height="22" fill="#121212" /><rect x="31" y="44" width="15" height="22" fill="#dcdad5" /><text x="50" y="59" font-family="Liberation Sans" font-size="13.33" font-weight="normal" fill="#e6e6e6" letter-spacing="0.66" text-anchor="start" >Xfce-4.6</text><rect x="2" y="70" width="15" height="22" fill="#dcdadc" /><rect x="17" y="70" width="14" height="22" fill="#000000" /><rect x="31" y="70" width="15" height="22" fill="#b8b5b8" /><text x="50" y="85" font-family="Liberation Sans" font-size="13.33" font-weight="normal" fill="#e6e6e6" letter-spacing="0.66" text-anchor="start" >Xfce-b5</text><rect x="2" y="96" width="15" height="22" fill="#dcdbd6" /><rect x="17" y="96" width="14" height="22" fill="#000000" /><rect x="31" y="96" width="15" height="22" fill="#4a6481" /><text x="50" y="111" font-family="Liberation Sans" font-size="13.33" font-weight="normal" fill="#e6e6e6" letter-spacing="0.66" text-anchor="start" >Xfce-basic</text><rect x="2" y="122" width="15" height="22" fill="#eeeeee" /><rect x="17" y="122" width="14" height="22" fill="#000000" /><rect x="31" y="122" width="15" height="22" fill="#e0e0ee" /><text x="50" y="137" font-family="Liberation Sans" font-size="13.33" font-weight="normal" fill="#e6e6e6" letter-spacing="0.66" text-anchor="start" >Xfce-cadmium</text><rect x="2" y="148" width="15" height="22" fill="#e8e8e8" /><rect x="17" y="148" width="14" height="22" fill="#000000" /><rect x="31" y="148" width="15" height="22" fill="#4466aa" /><text x="50" y="163" font-family="Liberation Sans" font-size="13.33" font-weight="normal" fill="#e6e6e6" letter-spacing="0.66" text-anchor="start" >Xfce-curve</text><rect x="2" y="174" width="15" height="22" fill="#ece9e3" /><rect x="17" y="174" width="14" height="22" fill="#212121" /><rect x="31" y="174" width="15" height="22" fill="#b2c0d0" /><text x="50" y="189" font-family="Liberation Sans" font-size="13.33" font-weight="normal" fill="#e6e6e6" letter-spacing="0.66" text-anchor="start" >Xfce-dawn</text><rect x="0" y="198" width="443" height="26" fill="#062c62" /><rect x="0.5" y="198.5" width="442" height="25" fill="none" stroke="#0e3a78"/><rect x="2" y="200" width="15" height="22" fill="#2b2828" /><rect x="17" y="200" width="14" height="22" fill="#ffffff" /><rect x="31" y="200" width="15" height="22" fill="#0a2a52" /><text x="50" y="215" font-family="Liberation Sans" font-size="13.33" font-weight="normal" fill="#e6e6e6" letter-spacing="0.66" text-anchor="start" >Xfce-dusk</text><rect x="2" y="226" width="15" height="22" fill="#dcdcde" /><rect x="17" y="226" width="14" height="22" fill="#333333" /><rect x="31" y="226" width="15" height="22" fill="#1f9ccc" /><text x="50" y="241" font-family="Liberation Sans" font-size="13.33" font-weight="normal" fill="#e6e6e6" letter-spacing="0.66" text-anchor="start" >Xfce-flat</text><rect x="2" y="252" width="15" height="22" fill="#dcdcdc" /><rect x="17" y="252" width="14" height="22" fill="#000000" /><rect x="31" y="252" width="15" height="22" fill="#0c5e88" /><text x="50" y="267" font-family="Liberation Sans" font-size="13.33" font-weight="normal" fill="#e6e6e6" letter-spacing="0.66" text-anchor="start" >Xfce-kde2</text><rect x="2" y="278" width="15" height="22" fill="#efeee6" /><rect x="17" y="278" width="14" height="22" fill="#1e1e1e" /><rect x="31" y="278" width="15" height="22" fill="#ffd877" /><text x="50" y="293" font-family="Liberation Sans" font-size="13.33" font-weight="normal" fill="#e6e6e6" letter-spacing="0.66" text-anchor="start" >Xfce-kolors</text><rect x="2" y="304" width="15" height="22" fill="#ededdf" /><rect x="17" y="304" width="14" height="22" fill="#000000" /><rect x="31" y="304" width="15" height="22" fill="#bcb0d0" /><text x="50" y="319" font-family="Liberation Sans" font-size="13.33" font-weight="normal" fill="#e6e6e6" letter-spacing="0.66" text-anchor="start" >Xfce-light</text><rect x="2" y="330" width="15" height="22" fill="#f4f2ee" /><rect x="17" y="330" width="14" height="22" fill="#000000" /><rect x="31" y="330" width="15" height="22" fill="#e2dfd9" /><text x="50" y="345" font-family="Liberation Sans" font-size="13.33" font-weight="normal" fill="#e6e6e6" letter-spacing="0.66" text-anchor="start" >Xfce-orange</text><rect x="2" y="356" width="15" height="22" fill="#efebe0" /><rect x="17" y="356" width="14" height="22" fill="#000000" /><rect x="31" y="356" width="15" height="22" fill="#0054f5" /><text x="50" y="371" font-family="Liberation Sans" font-size="13.33" font-weight="normal" fill="#e6e6e6" letter-spacing="0.66" text-anchor="start" >Xfce-redmondxp</text><rect x="2" y="382" width="15" height="22" fill="#e3e4e0" /><rect x="17" y="382" width="14" height="22" fill="#000000" /><rect x="31" y="382" width="15" height="22" fill="#3a9a3a" /><text x="50" y="397" font-family="Liberation Sans" font-size="13.33" font-weight="normal" fill="#e6e6e6" letter-spacing="0.66" text-anchor="start" >Xfce-saltlake</text></svg><rect x="1885" y="162" width="10" height="392" fill="#1a1a1a" /><rect x="1885" y="162" width="10" height="10" fill="#262626" /><path d="M1887,169 L1890,165 L1893,169 Z" fill="#fff"/><rect x="1885" y="268" width="10" height="223" fill="#262626" rx="1"/><path d="M1887,547 L1890,551 L1893,547 Z" fill="#fff"/><rect x="1424.5" y="581.5" width="101" height="28" rx="2" fill="#272727" stroke="#181818"/><rect x="1807.5" y="581.5" width="102" height="28" rx="2" fill="#272727" stroke="#181818"/><rect x="1449.5" y="585.5" width="17" height="20" fill="#f8f8f8" stroke="#d8d8d8"/><rect x="1452" y="588" width="12" height="1" fill="#b8bcb8" /><rect x="1452" y="590" width="12" height="1" fill="#b8bcb8" /><circle cx="1458" cy="598" r="4.4" stroke="#f0f0f0" stroke-width="3" fill="none"/><circle cx="1458" cy="598" r="4.4" stroke="#d41c1c" stroke-width="3" fill="none" stroke-dasharray="3.456 3.456" stroke-dashoffset="-1.728" transform="rotate(0 1458 598)"/><circle cx="1458" cy="598" r="6" stroke="#9a9a9a" stroke-width="0.6" fill="none"/><circle cx="1458" cy="598" r="2.8" stroke="#9a9a9a" stroke-width="0.6" fill="none"/><text x="1471" y="600" font-family="Liberation Sans" font-size="13.33" font-weight="normal" fill="#f0f0f0" letter-spacing="0.62" text-anchor="start" >Hilfe</text><path d="M1820,591 L1831,602 M1831,591 L1820,602" stroke="#bbb" stroke-width="3"/><text x="1839" y="600" font-family="Liberation Sans" font-size="13.33" font-weight="normal" fill="#f0f0f0" letter-spacing="0.62" text-anchor="start" >Schließen</text><path d="M1,1080 V628 Q1,622 7,622 H1911 Q1917,622 1917,628 V1080 Z" fill="#000"/><path d="M1,1080 V641 H1917 V1080 Z" fill="#202020"/><path d="M1.5,641 V628 Q1.5,623 6.5,623 H1911.5 Q1916.5,623 1916.5,628 V641 Z" fill="url(#tg)"/><rect x="6.5" y="629.5" width="19" height="15" fill="#e8e8e8" stroke="#cfcfcf" stroke-width="1"/><rect x="7.5" y="630.5" width="17" height="12" fill="url(#termicon)" stroke="#050505" stroke-width="0.8"/><path d="M13.5,632 H16 L15,637 H13 Z M18,632 H23 V641 H15 Z" fill="#7a8a86" opacity="0.35"/><path d="M10,632.8 L12,634.2 L10,635.6" stroke="#fff" stroke-width="0.9" fill="none"/><rect x="12" y="637" width="2.6" height="1.2" fill="#e0e0e0" /><text x="832.5" y="642" font-family="Liberation Sans" font-size="13" font-weight="bold" fill="#a4a4ee" letter-spacing="0.62" text-anchor="start" >Terminal - web@archlinux:~</text><path d="M1836,641 V633 M1832,637 L1836,633 L1840,637" stroke="#6a6a6a" stroke-width="1.8" fill="none"/><rect x="1855" y="639" width="6" height="2" fill="#6a6a6a" /><rect x="1876.5" y="632.5" width="8" height="8" stroke="#6a6a6a" stroke-width="1.5" fill="none"/><path d="M1897,632 L1906,641 M1906,632 L1897,641" stroke="#6a6a6a" stroke-width="1.8" fill="none"/><rect x="3" y="651" width="1914" height="25" fill="#e8e8e7" /><text x="11.6" y="667.5" font-family="Liberation Sans" font-size="13.33" font-weight="normal" fill="#9a9a9a" letter-spacing="0.62" text-anchor="start" >Datei</text><text x="62.5" y="667.5" font-family="Liberation Sans" font-size="13.33" font-weight="normal" fill="#9a9a9a" letter-spacing="0.62" text-anchor="start" >Bearbeiten</text><text x="149.3" y="667.5" font-family="Liberation Sans" font-size="13.33" font-weight="normal" fill="#9a9a9a" letter-spacing="0.62" text-anchor="start" >Ansicht</text><text x="213" y="667.5" font-family="Liberation Sans" font-size="13.33" font-weight="normal" fill="#9a9a9a" letter-spacing="0.62" text-anchor="start" >Terminal</text><text x="285" y="667.5" font-family="Liberation Sans" font-size="13.33" font-weight="normal" fill="#9a9a9a" letter-spacing="0.62" text-anchor="start" >Reiter</text><text x="339" y="667.5" font-family="Liberation Sans" font-size="13.33" font-weight="normal" fill="#9a9a9a" letter-spacing="0.62" text-anchor="start" >Hilfe</text><rect x="3" y="676" width="1902" height="404" fill="#000" /><rect x="1905" y="676" width="12" height="404" fill="#e6e6e4" /><rect x="1908" y="880" width="6" height="196" fill="#c4c6c4" rx="3"/><text x="4.3" y="692" font-family="Liberation Mono" font-size="16.667" style="white-space:pre" xml:space="preserve"><tspan fill="#e8e8e8" font-weight="normal">[web@archlinux ~]$ screenfetch</tspan></text><text x="4.3" y="711" font-family="Liberation Mono" font-size="16.667" style="white-space:pre" xml:space="preserve"><tspan fill="#34e2e2" font-weight="bold">                   -`</tspan></text><text x="4.3" y="730" font-family="Liberation Mono" font-size="16.667" style="white-space:pre" xml:space="preserve"><tspan fill="#34e2e2" font-weight="bold">                  .o+`</tspan><tspan fill="#e8e8e8" font-weight="normal">                 </tspan><tspan fill="#34e2e2" font-weight="bold">web</tspan><tspan fill="#e8e8e8" font-weight="bold">@</tspan><tspan fill="#34e2e2" font-weight="bold">archlinux</tspan></text><text x="4.3" y="749" font-family="Liberation Mono" font-size="16.667" style="white-space:pre" xml:space="preserve"><tspan fill="#34e2e2" font-weight="bold">                 `ooo/</tspan><tspan fill="#e8e8e8" font-weight="normal">                 </tspan><tspan fill="#34e2e2" font-weight="bold">OS:</tspan><tspan fill="#e8e8e8" font-weight="normal"> Arch Linux</tspan></text><text x="4.3" y="768" font-family="Liberation Mono" font-size="16.667" style="white-space:pre" xml:space="preserve"><tspan fill="#34e2e2" font-weight="bold">                `+oooo:</tspan><tspan fill="#e8e8e8" font-weight="normal">                </tspan><tspan fill="#34e2e2" font-weight="bold">Kernel:</tspan><tspan fill="#e8e8e8" font-weight="normal"> x86_64 Linux 4.16.9-1-ARCH</tspan></text><text x="4.3" y="787" font-family="Liberation Mono" font-size="16.667" style="white-space:pre" xml:space="preserve"><tspan fill="#34e2e2" font-weight="bold">               `+oooooo:</tspan><tspan fill="#e8e8e8" font-weight="normal">               </tspan><tspan fill="#34e2e2" font-weight="bold">Uptime:</tspan><tspan fill="#e8e8e8" font-weight="normal"> 1h 53m</tspan></text><text x="4.3" y="806" font-family="Liberation Mono" font-size="16.667" style="white-space:pre" xml:space="preserve"><tspan fill="#34e2e2" font-weight="bold">               -+oooooo+:</tspan><tspan fill="#e8e8e8" font-weight="normal">              </tspan><tspan fill="#34e2e2" font-weight="bold">Packages:</tspan><tspan fill="#e8e8e8" font-weight="normal"> 829</tspan></text><text x="4.3" y="825" font-family="Liberation Mono" font-size="16.667" style="white-space:pre" xml:space="preserve"><tspan fill="#34e2e2" font-weight="bold">             `/:-:++oooo+:</tspan><tspan fill="#e8e8e8" font-weight="normal">             </tspan><tspan fill="#34e2e2" font-weight="bold">Shell:</tspan><tspan fill="#e8e8e8" font-weight="normal"> bash 4.4.23</tspan></text><text x="4.3" y="844" font-family="Liberation Mono" font-size="16.667" style="white-space:pre" xml:space="preserve"><tspan fill="#34e2e2" font-weight="bold">            `/++++/+++++++:</tspan><tspan fill="#e8e8e8" font-weight="normal">            </tspan><tspan fill="#34e2e2" font-weight="bold">Resolution:</tspan><tspan fill="#e8e8e8" font-weight="normal"> 1920x1080</tspan></text><text x="4.3" y="863" font-family="Liberation Mono" font-size="16.667" style="white-space:pre" xml:space="preserve"><tspan fill="#34e2e2" font-weight="bold">           `/++++++++++++++:</tspan><tspan fill="#e8e8e8" font-weight="normal">           </tspan><tspan fill="#34e2e2" font-weight="bold">DE:</tspan><tspan fill="#e8e8e8" font-weight="normal"> XFCE4</tspan></text><text x="4.3" y="882" font-family="Liberation Mono" font-size="16.667" style="white-space:pre" xml:space="preserve"><tspan fill="#34e2e2" font-weight="bold">          `/+++o</tspan><tspan fill="#06989a" font-weight="normal">oooooooo</tspan><tspan fill="#34e2e2" font-weight="bold">oooo/`</tspan><tspan fill="#e8e8e8" font-weight="normal">         </tspan><tspan fill="#34e2e2" font-weight="bold">WM:</tspan><tspan fill="#e8e8e8" font-weight="normal"> Xfwm4</tspan></text><text x="4.3" y="901" font-family="Liberation Mono" font-size="16.667" style="white-space:pre" xml:space="preserve"><tspan fill="#06989a" font-weight="normal">         </tspan><tspan fill="#34e2e2" font-weight="bold">./</tspan><tspan fill="#06989a" font-weight="normal">ooosssso++osssssso</tspan><tspan fill="#34e2e2" font-weight="bold">+`</tspan><tspan fill="#e8e8e8" font-weight="normal">        </tspan><tspan fill="#34e2e2" font-weight="bold">WM Theme:</tspan><tspan fill="#e8e8e8" font-weight="normal"> Default</tspan></text><text x="4.3" y="920" font-family="Liberation Mono" font-size="16.667" style="white-space:pre" xml:space="preserve"><tspan fill="#06989a" font-weight="normal">        .oossssso-````/ossssss+`</tspan><tspan fill="#e8e8e8" font-weight="normal">       </tspan><tspan fill="#34e2e2" font-weight="bold">GTK Theme:</tspan><tspan fill="#e8e8e8" font-weight="normal"> Xfce-dusk [GTK2]</tspan></text><text x="4.3" y="939" font-family="Liberation Mono" font-size="16.667" style="white-space:pre" xml:space="preserve"><tspan fill="#06989a" font-weight="normal">       -osssssso.      :ssssssso.</tspan><tspan fill="#e8e8e8" font-weight="normal">      </tspan><tspan fill="#34e2e2" font-weight="bold">Icon Theme:</tspan><tspan fill="#e8e8e8" font-weight="normal"> gnome</tspan></text><text x="4.3" y="958" font-family="Liberation Mono" font-size="16.667" style="white-space:pre" xml:space="preserve"><tspan fill="#06989a" font-weight="normal">      :osssssss/        osssso+++.</tspan><tspan fill="#e8e8e8" font-weight="normal">     </tspan><tspan fill="#34e2e2" font-weight="bold">Font:</tspan><tspan fill="#e8e8e8" font-weight="normal"> Sans 10</tspan></text><text x="4.3" y="977" font-family="Liberation Mono" font-size="16.667" style="white-space:pre" xml:space="preserve"><tspan fill="#06989a" font-weight="normal">     /ossssssss/        +ssssooo/-</tspan><tspan fill="#e8e8e8" font-weight="normal">     </tspan><tspan fill="#34e2e2" font-weight="bold">CPU:</tspan><tspan fill="#e8e8e8" font-weight="normal"> AMD FX-4300 Quad-Core @ 4x 3.8GHz [46.1°C]</tspan></text><text x="4.3" y="996" font-family="Liberation Mono" font-size="16.667" style="white-space:pre" xml:space="preserve"><tspan fill="#06989a" font-weight="normal">   `/ossssso+/:-        -:/+osssso+-</tspan><tspan fill="#e8e8e8" font-weight="normal">   </tspan><tspan fill="#34e2e2" font-weight="bold">GPU:</tspan><tspan fill="#e8e8e8" font-weight="normal"> AMD Radeon (TM) RX 480 Graphics (POLARIS10, DRM 3.23.0, 4.16.9-1-ARCH, LLVM 6.0.0)</tspan></text><text x="4.3" y="1015" font-family="Liberation Mono" font-size="16.667" style="white-space:pre" xml:space="preserve"><tspan fill="#06989a" font-weight="normal">  `+sso+:-`                 `.-/+oso:</tspan><tspan fill="#e8e8e8" font-weight="normal">  </tspan><tspan fill="#34e2e2" font-weight="bold">RAM:</tspan><tspan fill="#e8e8e8" font-weight="normal"> 1895MiB / 7937MiB</tspan></text><text x="4.3" y="1034" font-family="Liberation Mono" font-size="16.667" style="white-space:pre" xml:space="preserve"><tspan fill="#06989a" font-weight="normal"> `++:.                           `-/+/</tspan></text><text x="4.3" y="1053" font-family="Liberation Mono" font-size="16.667" style="white-space:pre" xml:space="preserve"><tspan fill="#06989a" font-weight="normal"> .`                                 `/</tspan></text><text x="4.3" y="1072" font-family="Liberation Mono" font-size="16.667" style="white-space:pre" xml:space="preserve"><tspan fill="#e8e8e8" font-weight="normal">[web@archlinux ~]$ </tspan></text><rect x="195.5" y="1058.5" width="10" height="18" fill="none" stroke="#fff"/><rect x="1920" y="0" width="1917" height="622" fill="#202020" /><rect x="1920" y="0" width="1917" height="1" fill="#000" /><rect x="1920" y="1" width="1917" height="18" fill="url(#tg)" /><text x="2741.6" y="20" font-family="Liberation Sans" font-size="13" font-weight="bold" fill="#a4a4ee" letter-spacing="0.72" text-anchor="start" >Dateisystem - Dateiverwaltung</text><path d="M1924,8.5 H1939 L1941.5,18 H1921.5 Z" fill="url(#drv2)" stroke="#9a9a9a" stroke-width="0.7"/><rect x="1921.5" y="18" width="20" height="4" rx="0.8" fill="#e8e8e8" stroke="#8a8a8a" stroke-width="0.6"/><rect x="1923" y="19.2" width="17" height="1.3" fill="#3a3a3a" /><ellipse cx="1931.5" cy="13.5" rx="5.880000000000001" ry="3.2" fill="none" stroke="#a8a8a8" stroke-width="0.8"/><path d="M3761,19 V11 M3757,15 L3761,11 L3765,15" stroke="#6a6a6a" stroke-width="1.8" fill="none"/><rect x="3780" y="17" width="6" height="2" fill="#6a6a6a" /><path d="M3803.5,13 V9.5 H3810.5 V16.5 H3808" stroke="#6a6a6a" stroke-width="1.3" fill="none"/><rect x="3800.5" y="13.5" width="7" height="6.5" stroke="#6a6a6a" stroke-width="1.3" fill="none"/><path d="M3822,10 L3831,19 M3831,10 L3822,19" stroke="#6a6a6a" stroke-width="1.8" fill="none"/><rect x="1920" y="28.5" width="1917" height="25.5" fill="#e8e8e7" /><text x="1928.4" y="45.7" font-family="Liberation Sans" font-size="13.33" font-weight="normal" fill="#8f8f8f" letter-spacing="0.62" text-anchor="start" >Datei</text><text x="1979.3" y="45.7" font-family="Liberation Sans" font-size="13.33" font-weight="normal" fill="#8f8f8f" letter-spacing="0.62" text-anchor="start" >Bearbeiten</text><text x="2066" y="45.7" font-family="Liberation Sans" font-size="13.33" font-weight="normal" fill="#8f8f8f" letter-spacing="0.62" text-anchor="start" >Ansicht</text><text x="2130" y="45.7" font-family="Liberation Sans" font-size="13.33" font-weight="normal" fill="#8f8f8f" letter-spacing="0.62" text-anchor="start" >Gehen zu</text><text x="2207" y="45.7" font-family="Liberation Sans" font-size="13.33" font-weight="normal" fill="#8f8f8f" letter-spacing="0.62" text-anchor="start" >Hilfe</text><rect x="1920" y="53" width="1917" height="1" fill="#d0d0ce" /><rect x="1920" y="54" width="1917" height="42" fill="#e8e8e7" /><rect x="2096.5" y="58.5" width="1737" height="34" rx="3" fill="#fcfcfc" stroke="#c8c8c6"/><path d="M1950,66 L1942,75 L1950,84" stroke="#8d8f8d" stroke-width="2.5" fill="none"/><path d="M1982,66 L1990,75 L1982,84" stroke="#c4c6c4" stroke-width="2.5" fill="none"/><path d="M2022,80 L2031,72 L2040,80" stroke="#c4c6c4" stroke-width="2.5" fill="none"/><path d="M2063,74 L2074,65.5 L2085,74" stroke="#8d8f8d" stroke-width="3" fill="none" stroke-linecap="round"/><path d="M2066.5,72 V82.5 H2081.5 V72" stroke="#8d8f8d" stroke-width="3" fill="none" stroke-linejoin="round"/><rect x="2072.3" y="75.2" width="3.4" height="7.5" fill="#8d8f8d" /><rect x="2106.5" y="69.5" width="13" height="13" rx="1.5" fill="url(#drv2)" stroke="#8a8a8a"/><ellipse cx="2113" cy="75.5" rx="4" ry="3" fill="none" stroke="#a0a0a0" stroke-width="0.8"/><text x="2127" y="82" font-family="Liberation Sans" font-size="13.33" font-weight="normal" fill="#333" letter-spacing="0" text-anchor="start" >/</text><rect x="1921" y="97" width="2129" height="525" fill="#fafafa" /><rect x="2050" y="97" width="0" height="0" fill="#000" /><rect x="4050" y="97" width="1" height="525" fill="#c4c4c4" /><rect x="2131" y="97" width="0" height="0" fill="#000" /><rect x="2131" y="97" width="1706" height="525" fill="#fbfbfb" /><rect x="2130" y="97" width="1" height="525" fill="#c4c4c4" /><rect x="1920" y="97" width="210" height="525" fill="#fafafa" /><text x="1928.5" y="114" font-family="Liberation Sans" font-size="13.33" font-weight="bold" fill="#2e3436" letter-spacing="0.2" text-anchor="start" >GERÄTE</text><rect x="1920" y="123" width="210" height="27" fill="#4a90d9" /><path d="M1940.5,130.5 H1955.5 L1958.0,141.0 H1938.0 Z" fill="url(#drv2)" stroke="#9a9a9a" stroke-width="0.7"/><rect x="1938.0" y="141.0" width="20" height="4" rx="0.8" fill="#e8e8e8" stroke="#8a8a8a" stroke-width="0.6"/><rect x="1939.5" y="142.2" width="17" height="1.3" fill="#3a3a3a" /><ellipse cx="1948.0" cy="136.0" rx="5.880000000000001" ry="3.52" fill="none" stroke="#a8a8a8" stroke-width="0.8"/><text x="1964" y="141.5" font-family="Liberation Sans" font-size="13.33" font-weight="normal" fill="#ffffff" letter-spacing="0.62" text-anchor="start" >Dateisystem</text><path d="M1940.5,158.5 H1955.5 L1958.0,167.0 H1938.0 Z" fill="url(#drv2)" stroke="#9a9a9a" stroke-width="0.7"/><rect x="1938.0" y="167.0" width="20" height="4" rx="0.8" fill="#e8e8e8" stroke="#8a8a8a" stroke-width="0.6"/><rect x="1939.5" y="168.2" width="17" height="1.3" fill="#3a3a3a" /><text x="1964" y="168.5" font-family="Liberation Sans" font-size="13.33" font-weight="normal" fill="#2e3436" letter-spacing="0.62" text-anchor="start" >MainStorage</text><path d="M1940.5,185.0 H1955.5 L1958.0,193.5 H1938.0 Z" fill="url(#drv2)" stroke="#9a9a9a" stroke-width="0.7"/><rect x="1938.0" y="193.5" width="20" height="4" rx="0.8" fill="#e8e8e8" stroke="#8a8a8a" stroke-width="0.6"/><rect x="1939.5" y="194.7" width="17" height="1.3" fill="#3a3a3a" /><text x="1964" y="195" font-family="Liberation Sans" font-size="13.33" font-weight="normal" fill="#2e3436" letter-spacing="0.62" text-anchor="start" >backup</text><text x="1928.5" y="222" font-family="Liberation Sans" font-size="13.33" font-weight="bold" fill="#2e3436" letter-spacing="0.1" text-anchor="start" >ORTE</text><text x="1964" y="249" font-family="Liberation Sans" font-size="13.33" font-weight="normal" fill="#2e3436" letter-spacing="0.62" text-anchor="start" >web</text><text x="1964" y="276" font-family="Liberation Sans" font-size="13.33" font-weight="normal" fill="#2e3436" letter-spacing="0.62" text-anchor="start" >Desktop</text><path d="M1938.5,244 L1947.5,235.5 L1956.5,244" stroke="#6e6e6e" stroke-width="4.2" fill="none" stroke-linecap="round"/><path d="M1938.5,244 L1947.5,235.5 L1956.5,244" stroke="#f8f8f8" stroke-width="2.4" fill="none" stroke-linecap="round"/><path d="M1941,246 V253 H1945.5 V249.5 H1949.5 V253 H1954 V246" stroke="#6e6e6e" stroke-width="3.4" fill="none"/><path d="M1941,246 V253 H1945.5 V249.5 H1949.5 V253 H1954 V246" stroke="#f8f8f8" stroke-width="1.6" fill="none"/><path d="M1939.5,264 Q1939.5,263 1940.5,263 H1947 L1949,265 H1956 Q1957,265 1957,266 V275 H1939.5 Z" fill="#8f7d62" stroke="#a07c48" stroke-width="0.7"/><path d="M1938.5,268.5 H1944 L1946,266.8 H1956.5 Q1957.5,266.8 1957.5,267.8 V279.5 Q1957.5,280.5 1956.5,280.5 H1939.5 Q1938.5,280.5 1938.5,279.5 Z" fill="url(#fold)" stroke="#a07c48" stroke-width="0.8"/><path d="M1944,271.5 V270.5 H1945.5 M1950.5,270.5 H1952 V271.5 M1952,276 V277 H1950.5 M1945.5,277 H1944 V276" stroke="#4a3e2e" stroke-width="0.9" fill="none"/><text x="1948" y="277" font-family="Liberation Sans" font-size="7" font-weight="bold" fill="#4a3e2e" text-anchor="middle">D</text><text x="1928.5" y="303" font-family="Liberation Sans" font-size="13.33" font-weight="bold" fill="#2e3436" letter-spacing="0.68" text-anchor="start" >NETZWERK</text><text x="1964" y="330" font-family="Liberation Sans" font-size="13.33" font-weight="normal" fill="#2e3436" letter-spacing="0.62" text-anchor="start" >Netzwerk durchsuchen</text><rect x="1937.5" y="317.0" width="10" height="8" fill="#e8e8e8" stroke="#bbb" stroke-width="0.6"/><rect x="1939.0" y="318.3" width="7" height="5" fill="#2c58a8"/><rect x="1938.0" y="326.5" width="9" height="1.5" fill="#d8d8d8" /><rect x="1949" y="317.0" width="10" height="8" fill="#e8e8e8" stroke="#bbb" stroke-width="0.6"/><rect x="1950.5" y="318.3" width="7" height="5" fill="#2c58a8"/><rect x="1949.5" y="326.5" width="9" height="1.5" fill="#d8d8d8" /><rect x="1941.5" y="320.5" width="13" height="9" fill="#ececec" stroke="#aaa" stroke-width="0.6"/><rect x="1943" y="322.0" width="10" height="6" fill="#3060b0" stroke="#1a3a80" stroke-width="0.5"/><rect x="1944.5" y="330.5" width="7" height="1.5" fill="#e0e0e0" /><path d="M1941.5,332.5 H1954.5 L1955,335.0 H1941 Z" fill="#e8e8e8"/><path d="M2142,113 Q2142,111 2144,111 H2158 L2161,114.5 H2182 Q2184,114.5 2184,116.5 V141 H2142 Z" fill="url(#foldtab)" stroke="#9a7a4a" stroke-width="0.8"/><path d="M2141,123.5 H2152 L2156,119.5 H2183 Q2185,119.5 2185,121.5 V146 Q2185,148.5 2182,148.5 H2144 Q2141,148.5 2141,146 Z" fill="url(#fold)" stroke="#a07c48" stroke-width="0.9"/><path d="M2143,124.5 H2152.5 L2156.5,120.5 H2183" stroke="#e6dccb" stroke-width="0.8" fill="none" opacity="0.7"/><rect x="2159.5" y="129.5" width="26" height="26" rx="3.5" fill="url(#emb)" stroke="#f4f4f4"/><path transform="translate(2159,129)" d="M5,16 C6.5,9 13,6.5 17.8,10.8 L22.5,7.5 V17.5 H13.5 L16,15 C12,11.8 8.5,12.5 5,16 Z" fill="#8e928e"/><text x="2163" y="173" font-family="Liberation Sans" font-size="13.33" font-weight="normal" fill="#2e3436" letter-spacing="0.62" text-anchor="middle" >bin</text><path d="M2200,113 Q2200,111 2202,111 H2216 L2219,114.5 H2240 Q2242,114.5 2242,116.5 V141 H2200 Z" fill="url(#foldtab)" stroke="#9a7a4a" stroke-width="0.8"/><path d="M2199,123.5 H2210 L2214,119.5 H2241 Q2243,119.5 2243,121.5 V146 Q2243,148.5 2240,148.5 H2202 Q2199,148.5 2199,146 Z" fill="url(#fold)" stroke="#a07c48" stroke-width="0.9"/><path d="M2201,124.5 H2210.5 L2214.5,120.5 H2241" stroke="#e6dccb" stroke-width="0.8" fill="none" opacity="0.7"/><text x="2221" y="173" font-family="Liberation Sans" font-size="13.33" font-weight="normal" fill="#2e3436" letter-spacing="0.62" text-anchor="middle" >boot</text><path d="M2258,113 Q2258,111 2260,111 H2274 L2277,114.5 H2298 Q2300,114.5 2300,116.5 V141 H2258 Z" fill="url(#foldtab)" stroke="#9a7a4a" stroke-width="0.8"/><path d="M2257,123.5 H2268 L2272,119.5 H2299 Q2301,119.5 2301,121.5 V146 Q2301,148.5 2298,148.5 H2260 Q2257,148.5 2257,146 Z" fill="url(#fold)" stroke="#a07c48" stroke-width="0.9"/><path d="M2259,124.5 H2268.5 L2272.5,120.5 H2299" stroke="#e6dccb" stroke-width="0.8" fill="none" opacity="0.7"/><text x="2279" y="173" font-family="Liberation Sans" font-size="13.33" font-weight="normal" fill="#2e3436" letter-spacing="0.62" text-anchor="middle" >dev</text><path d="M2316,113 Q2316,111 2318,111 H2332 L2335,114.5 H2356 Q2358,114.5 2358,116.5 V141 H2316 Z" fill="url(#foldtab)" stroke="#9a7a4a" stroke-width="0.8"/><path d="M2315,123.5 H2326 L2330,119.5 H2357 Q2359,119.5 2359,121.5 V146 Q2359,148.5 2356,148.5 H2318 Q2315,148.5 2315,146 Z" fill="url(#fold)" stroke="#a07c48" stroke-width="0.9"/><path d="M2317,124.5 H2326.5 L2330.5,120.5 H2357" stroke="#e6dccb" stroke-width="0.8" fill="none" opacity="0.7"/><text x="2337" y="173" font-family="Liberation Sans" font-size="13.33" font-weight="normal" fill="#2e3436" letter-spacing="0.62" text-anchor="middle" >etc</text><path d="M2374,113 Q2374,111 2376,111 H2390 L2393,114.5 H2414 Q2416,114.5 2416,116.5 V141 H2374 Z" fill="url(#foldtab)" stroke="#9a7a4a" stroke-width="0.8"/><path d="M2373,123.5 H2384 L2388,119.5 H2415 Q2417,119.5 2417,121.5 V146 Q2417,148.5 2414,148.5 H2376 Q2373,148.5 2373,146 Z" fill="url(#fold)" stroke="#a07c48" stroke-width="0.9"/><path d="M2375,124.5 H2384.5 L2388.5,120.5 H2415" stroke="#e6dccb" stroke-width="0.8" fill="none" opacity="0.7"/><text x="2395" y="173" font-family="Liberation Sans" font-size="13.33" font-weight="normal" fill="#2e3436" letter-spacing="0.62" text-anchor="middle" >home</text><path d="M2432,113 Q2432,111 2434,111 H2448 L2451,114.5 H2472 Q2474,114.5 2474,116.5 V141 H2432 Z" fill="url(#foldtab)" stroke="#9a7a4a" stroke-width="0.8"/><path d="M2431,123.5 H2442 L2446,119.5 H2473 Q2475,119.5 2475,121.5 V146 Q2475,148.5 2472,148.5 H2434 Q2431,148.5 2431,146 Z" fill="url(#fold)" stroke="#a07c48" stroke-width="0.9"/><path d="M2433,124.5 H2442.5 L2446.5,120.5 H2473" stroke="#e6dccb" stroke-width="0.8" fill="none" opacity="0.7"/><rect x="2449.5" y="129.5" width="26" height="26" rx="3.5" fill="url(#emb)" stroke="#f4f4f4"/><path transform="translate(2449,129)" d="M5,16 C6.5,9 13,6.5 17.8,10.8 L22.5,7.5 V17.5 H13.5 L16,15 C12,11.8 8.5,12.5 5,16 Z" fill="#8e928e"/><text x="2453" y="173" font-family="Liberation Sans" font-size="13.33" font-weight="normal" fill="#2e3436" letter-spacing="0.62" text-anchor="middle" >lib</text><path d="M2490,113 Q2490,111 2492,111 H2506 L2509,114.5 H2530 Q2532,114.5 2532,116.5 V141 H2490 Z" fill="url(#foldtab)" stroke="#9a7a4a" stroke-width="0.8"/><path d="M2489,123.5 H2500 L2504,119.5 H2531 Q2533,119.5 2533,121.5 V146 Q2533,148.5 2530,148.5 H2492 Q2489,148.5 2489,146 Z" fill="url(#fold)" stroke="#a07c48" stroke-width="0.9"/><path d="M2491,124.5 H2500.5 L2504.5,120.5 H2531" stroke="#e6dccb" stroke-width="0.8" fill="none" opacity="0.7"/><rect x="2507.5" y="129.5" width="26" height="26" rx="3.5" fill="url(#emb)" stroke="#f4f4f4"/><path transform="translate(2507,129)" d="M5,16 C6.5,9 13,6.5 17.8,10.8 L22.5,7.5 V17.5 H13.5 L16,15 C12,11.8 8.5,12.5 5,16 Z" fill="#8e928e"/><text x="2511" y="173" font-family="Liberation Sans" font-size="13.33" font-weight="normal" fill="#2e3436" letter-spacing="0.62" text-anchor="middle" >lib64</text><path d="M2548,113 Q2548,111 2550,111 H2564 L2567,114.5 H2588 Q2590,114.5 2590,116.5 V141 H2548 Z" fill="url(#foldtab)" stroke="#9a7a4a" stroke-width="0.8"/><path d="M2547,123.5 H2558 L2562,119.5 H2589 Q2591,119.5 2591,121.5 V146 Q2591,148.5 2588,148.5 H2550 Q2547,148.5 2547,146 Z" fill="url(#fold)" stroke="#a07c48" stroke-width="0.9"/><path d="M2549,124.5 H2558.5 L2562.5,120.5 H2589" stroke="#e6dccb" stroke-width="0.8" fill="none" opacity="0.7"/><text x="2569" y="173" font-family="Liberation Sans" font-size="13.33" font-weight="normal" fill="#2e3436" letter-spacing="0.62" text-anchor="middle" >mnt</text><path d="M2606,113 Q2606,111 2608,111 H2622 L2625,114.5 H2646 Q2648,114.5 2648,116.5 V141 H2606 Z" fill="url(#foldtab)" stroke="#9a7a4a" stroke-width="0.8"/><path d="M2605,123.5 H2616 L2620,119.5 H2647 Q2649,119.5 2649,121.5 V146 Q2649,148.5 2646,148.5 H2608 Q2605,148.5 2605,146 Z" fill="url(#fold)" stroke="#a07c48" stroke-width="0.9"/><path d="M2607,124.5 H2616.5 L2620.5,120.5 H2647" stroke="#e6dccb" stroke-width="0.8" fill="none" opacity="0.7"/><text x="2627" y="173" font-family="Liberation Sans" font-size="13.33" font-weight="normal" fill="#2e3436" letter-spacing="0.62" text-anchor="middle" >opt</text><path d="M2664,113 Q2664,111 2666,111 H2680 L2683,114.5 H2704 Q2706,114.5 2706,116.5 V141 H2664 Z" fill="url(#foldtab)" stroke="#9a7a4a" stroke-width="0.8"/><path d="M2663,123.5 H2674 L2678,119.5 H2705 Q2707,119.5 2707,121.5 V146 Q2707,148.5 2704,148.5 H2666 Q2663,148.5 2663,146 Z" fill="url(#fold)" stroke="#a07c48" stroke-width="0.9"/><path d="M2665,124.5 H2674.5 L2678.5,120.5 H2705" stroke="#e6dccb" stroke-width="0.8" fill="none" opacity="0.7"/><text x="2685" y="173" font-family="Liberation Sans" font-size="13.33" font-weight="normal" fill="#2e3436" letter-spacing="0.62" text-anchor="middle" >proc</text><path d="M2722,113 Q2722,111 2724,111 H2738 L2741,114.5 H2762 Q2764,114.5 2764,116.5 V141 H2722 Z" fill="url(#foldtab)" stroke="#9a7a4a" stroke-width="0.8"/><path d="M2721,123.5 H2732 L2736,119.5 H2763 Q2765,119.5 2765,121.5 V146 Q2765,148.5 2762,148.5 H2724 Q2721,148.5 2721,146 Z" fill="url(#fold)" stroke="#a07c48" stroke-width="0.9"/><path d="M2723,124.5 H2732.5 L2736.5,120.5 H2763" stroke="#e6dccb" stroke-width="0.8" fill="none" opacity="0.7"/><rect x="2739.5" y="129.5" width="26" height="26" rx="3" fill="url(#emb)" stroke="#cfcfcf"/><path d="M2746,136 L2759,149 M2759,136 L2746,149" stroke="#8c8c8c" stroke-width="3"/><text x="2743" y="173" font-family="Liberation Sans" font-size="13.33" font-weight="normal" fill="#2e3436" letter-spacing="0.62" text-anchor="middle" >root</text><path d="M2780,113 Q2780,111 2782,111 H2796 L2799,114.5 H2820 Q2822,114.5 2822,116.5 V141 H2780 Z" fill="url(#foldtab)" stroke="#9a7a4a" stroke-width="0.8"/><path d="M2779,123.5 H2790 L2794,119.5 H2821 Q2823,119.5 2823,121.5 V146 Q2823,148.5 2820,148.5 H2782 Q2779,148.5 2779,146 Z" fill="url(#fold)" stroke="#a07c48" stroke-width="0.9"/><path d="M2781,124.5 H2790.5 L2794.5,120.5 H2821" stroke="#e6dccb" stroke-width="0.8" fill="none" opacity="0.7"/><text x="2801" y="173" font-family="Liberation Sans" font-size="13.33" font-weight="normal" fill="#2e3436" letter-spacing="0.62" text-anchor="middle" >run</text><path d="M2838,113 Q2838,111 2840,111 H2854 L2857,114.5 H2878 Q2880,114.5 2880,116.5 V141 H2838 Z" fill="url(#foldtab)" stroke="#9a7a4a" stroke-width="0.8"/><path d="M2837,123.5 H2848 L2852,119.5 H2879 Q2881,119.5 2881,121.5 V146 Q2881,148.5 2878,148.5 H2840 Q2837,148.5 2837,146 Z" fill="url(#fold)" stroke="#a07c48" stroke-width="0.9"/><path d="M2839,124.5 H2848.5 L2852.5,120.5 H2879" stroke="#e6dccb" stroke-width="0.8" fill="none" opacity="0.7"/><rect x="2855.5" y="129.5" width="26" height="26" rx="3.5" fill="url(#emb)" stroke="#f4f4f4"/><path transform="translate(2855,129)" d="M5,16 C6.5,9 13,6.5 17.8,10.8 L22.5,7.5 V17.5 H13.5 L16,15 C12,11.8 8.5,12.5 5,16 Z" fill="#8e928e"/><text x="2859" y="173" font-family="Liberation Sans" font-size="13.33" font-weight="normal" fill="#2e3436" letter-spacing="0.62" text-anchor="middle" >sbin</text><path d="M2896,113 Q2896,111 2898,111 H2912 L2915,114.5 H2936 Q2938,114.5 2938,116.5 V141 H2896 Z" fill="url(#foldtab)" stroke="#9a7a4a" stroke-width="0.8"/><path d="M2895,123.5 H2906 L2910,119.5 H2937 Q2939,119.5 2939,121.5 V146 Q2939,148.5 2936,148.5 H2898 Q2895,148.5 2895,146 Z" fill="url(#fold)" stroke="#a07c48" stroke-width="0.9"/><path d="M2897,124.5 H2906.5 L2910.5,120.5 H2937" stroke="#e6dccb" stroke-width="0.8" fill="none" opacity="0.7"/><text x="2917" y="173" font-family="Liberation Sans" font-size="13.33" font-weight="normal" fill="#2e3436" letter-spacing="0.62" text-anchor="middle" >srv</text><path d="M2954,113 Q2954,111 2956,111 H2970 L2973,114.5 H2994 Q2996,114.5 2996,116.5 V141 H2954 Z" fill="url(#foldtab)" stroke="#9a7a4a" stroke-width="0.8"/><path d="M2953,123.5 H2964 L2968,119.5 H2995 Q2997,119.5 2997,121.5 V146 Q2997,148.5 2994,148.5 H2956 Q2953,148.5 2953,146 Z" fill="url(#fold)" stroke="#a07c48" stroke-width="0.9"/><path d="M2955,124.5 H2964.5 L2968.5,120.5 H2995" stroke="#e6dccb" stroke-width="0.8" fill="none" opacity="0.7"/><text x="2975" y="173" font-family="Liberation Sans" font-size="13.33" font-weight="normal" fill="#2e3436" letter-spacing="0.62" text-anchor="middle" >sys</text><path d="M3012,113 Q3012,111 3014,111 H3028 L3031,114.5 H3052 Q3054,114.5 3054,116.5 V141 H3012 Z" fill="url(#foldtab)" stroke="#9a7a4a" stroke-width="0.8"/><path d="M3011,123.5 H3022 L3026,119.5 H3053 Q3055,119.5 3055,121.5 V146 Q3055,148.5 3052,148.5 H3014 Q3011,148.5 3011,146 Z" fill="url(#fold)" stroke="#a07c48" stroke-width="0.9"/><path d="M3013,124.5 H3022.5 L3026.5,120.5 H3053" stroke="#e6dccb" stroke-width="0.8" fill="none" opacity="0.7"/><text x="3033" y="173" font-family="Liberation Sans" font-size="13.33" font-weight="normal" fill="#2e3436" letter-spacing="0.62" text-anchor="middle" >tmp</text><path d="M3070,113 Q3070,111 3072,111 H3086 L3089,114.5 H3110 Q3112,114.5 3112,116.5 V141 H3070 Z" fill="url(#foldtab)" stroke="#9a7a4a" stroke-width="0.8"/><path d="M3069,123.5 H3080 L3084,119.5 H3111 Q3113,119.5 3113,121.5 V146 Q3113,148.5 3110,148.5 H3072 Q3069,148.5 3069,146 Z" fill="url(#fold)" stroke="#a07c48" stroke-width="0.9"/><path d="M3071,124.5 H3080.5 L3084.5,120.5 H3111" stroke="#e6dccb" stroke-width="0.8" fill="none" opacity="0.7"/><text x="3091" y="173" font-family="Liberation Sans" font-size="13.33" font-weight="normal" fill="#2e3436" letter-spacing="0.62" text-anchor="middle" >usr</text><path d="M3128,113 Q3128,111 3130,111 H3144 L3147,114.5 H3168 Q3170,114.5 3170,116.5 V141 H3128 Z" fill="url(#foldtab)" stroke="#9a7a4a" stroke-width="0.8"/><path d="M3127,123.5 H3138 L3142,119.5 H3169 Q3171,119.5 3171,121.5 V146 Q3171,148.5 3168,148.5 H3130 Q3127,148.5 3127,146 Z" fill="url(#fold)" stroke="#a07c48" stroke-width="0.9"/><path d="M3129,124.5 H3138.5 L3142.5,120.5 H3169" stroke="#e6dccb" stroke-width="0.8" fill="none" opacity="0.7"/><text x="3149" y="173" font-family="Liberation Sans" font-size="13.33" font-weight="normal" fill="#2e3436" letter-spacing="0.62" text-anchor="middle" >var</text><path d="M3189.5,109.5 H3213 L3225,121.5 V151.5 H3189.5 Z" fill="#fdfdfd" stroke="#b8b8b8"/><path d="M3213,109.5 V121.5 H3225 Z" fill="#e4e4e4" stroke="#b8b8b8" stroke-width="0.8"/><rect x="3193" y="116.0" width="18" height="0.8" fill="#c4c4c4" /><rect x="3193" y="118.5" width="18" height="0.8" fill="#c4c4c4" /><rect x="3193" y="121.0" width="18" height="0.8" fill="#c4c4c4" /><rect x="3193" y="123.5" width="18" height="0.8" fill="#c4c4c4" /><rect x="3193" y="126.0" width="28" height="0.8" fill="#c4c4c4" /><rect x="3193" y="128.5" width="28" height="0.8" fill="#c4c4c4" /><rect x="3193" y="131.0" width="28" height="0.8" fill="#c4c4c4" /><rect x="3193" y="133.5" width="28" height="0.8" fill="#c4c4c4" /><rect x="3193" y="136.0" width="28" height="0.8" fill="#c4c4c4" /><rect x="3193" y="138.5" width="28" height="0.8" fill="#c4c4c4" /><rect x="3193" y="141.0" width="28" height="0.8" fill="#c4c4c4" /><rect x="3193" y="143.5" width="28" height="0.8" fill="#c4c4c4" /><rect x="3193" y="146.0" width="28" height="0.8" fill="#c4c4c4" /><rect x="3184" y="158" width="46" height="21" rx="4" fill="#4a90d9"/><text x="3207" y="173" font-family="Liberation Sans" font-size="13.33" font-weight="normal" fill="#ffffff" letter-spacing="0.62" text-anchor="middle" >file.txt</text><rect x="2625" y="352" width="713" height="272" fill="#000" opacity="0.16" filter="url(#blur)"/><path d="M2627,622 V359 Q2627,353 2633,353 H3330 Q3336,353 3336,359 V622 Z" fill="#000"/><path d="M2627,622 V372 H3336 V622 Z" fill="#202020"/><path d="M2627.5,372 V359 Q2627.5,354 2632.5,354 H3330.5 Q3335.5,354 3335.5,359 V372 Z" fill="url(#tg)"/><rect x="3333" y="382" width="3" height="240" fill="#1c1c1c" /><rect x="2632.5" y="360.5" width="19" height="15" fill="#e8e8e8" stroke="#cfcfcf" stroke-width="1"/><rect x="2633.5" y="361.5" width="17" height="12" fill="url(#termicon)" stroke="#050505" stroke-width="0.8"/><path d="M2639.5,363 H2642 L2641,368 H2639 Z M2644,363 H2649 V372 H2641 Z" fill="#7a8a86" opacity="0.35"/><path d="M2636,363.8 L2638,365.2 L2636,366.6" stroke="#fff" stroke-width="0.9" fill="none"/><rect x="2638" y="368" width="2.6" height="1.2" fill="#e0e0e0" /><text x="2853.4" y="373" font-family="Liberation Sans" font-size="13" font-weight="bold" fill="#ffffff" letter-spacing="0.62" text-anchor="start" >Terminal - web@archlinux:~</text><path d="M3254,373 V365 M3250,369 L3254,365 L3258,369" stroke="#ffffff" stroke-width="2" fill="none"/><rect x="3273" y="371" width="6" height="2" fill="#ffffff" /><rect x="3294.5" y="364.5" width="8" height="8" stroke="#ffffff" stroke-width="1.5" fill="none"/><path d="M3315,364 L3324,373 M3324,364 L3315,373" stroke="#ffffff" stroke-width="2" fill="none"/><rect x="2629" y="382" width="702" height="25" fill="#e8e8e7" /><text x="2637.7" y="399" font-family="Liberation Sans" font-size="13.33" font-weight="normal" fill="#555555" letter-spacing="0.62" text-anchor="start" >Datei</text><text x="2688.6" y="399" font-family="Liberation Sans" font-size="13.33" font-weight="normal" fill="#555555" letter-spacing="0.62" text-anchor="start" >Bearbeiten</text><text x="2775.4" y="399" font-family="Liberation Sans" font-size="13.33" font-weight="normal" fill="#555555" letter-spacing="0.62" text-anchor="start" >Ansicht</text><text x="2839" y="399" font-family="Liberation Sans" font-size="13.33" font-weight="normal" fill="#555555" letter-spacing="0.62" text-anchor="start" >Terminal</text><text x="2911.4" y="399" font-family="Liberation Sans" font-size="13.33" font-weight="normal" fill="#555555" letter-spacing="0.62" text-anchor="start" >Reiter</text><text x="2965" y="399" font-family="Liberation Sans" font-size="13.33" font-weight="normal" fill="#555555" letter-spacing="0.62" text-anchor="start" >Hilfe</text><rect x="2629" y="407" width="692" height="211" fill="#000" /><rect x="3322" y="407" width="11" height="211" fill="#cdcdcb" /><rect x="3324.5" y="410" width="6" height="205" fill="#7e8282" rx="3"/><text x="2630.3" y="423" font-family="Liberation Mono" font-size="16.667" style="white-space:pre" xml:space="preserve"><tspan fill="#e8e8e8" font-weight="normal">[web@archlinux ~]$ sudo pacman -Ss thunar</tspan></text><text x="2630.3" y="442" font-family="Liberation Mono" font-size="16.667" style="white-space:pre" xml:space="preserve"><tspan fill="#e8e8e8" font-weight="normal">[sudo] Passwort für web:</tspan></text><text x="2630.3" y="461" font-family="Liberation Mono" font-size="16.667" style="white-space:pre" xml:space="preserve"><tspan fill="#e8e8e8" font-weight="normal">extra/thunar 1.8.1.11.gf5147445-1 (xfce4) [Installiert]</tspan></text><text x="2630.3" y="480" font-family="Liberation Mono" font-size="16.667" style="white-space:pre" xml:space="preserve"><tspan fill="#e8e8e8" font-weight="normal">    Modern file manager for Xfce</tspan></text><text x="2630.3" y="499" font-family="Liberation Mono" font-size="16.667" style="white-space:pre" xml:space="preserve"><tspan fill="#e8e8e8" font-weight="normal">extra/thunar-archive-plugin 0.4.0-1 (xfce4-goodies) [Installiert]</tspan></text><text x="2630.3" y="518" font-family="Liberation Mono" font-size="16.667" style="white-space:pre" xml:space="preserve"><tspan fill="#e8e8e8" font-weight="normal">    Create and extract archives in Thunar</tspan></text><text x="2630.3" y="537" font-family="Liberation Mono" font-size="16.667" style="white-space:pre" xml:space="preserve"><tspan fill="#e8e8e8" font-weight="normal">extra/thunar-media-tags-plugin 0.3.0-1 (xfce4-goodies) [Installiert]</tspan></text><text x="2630.3" y="556" font-family="Liberation Mono" font-size="16.667" style="white-space:pre" xml:space="preserve"><tspan fill="#e8e8e8" font-weight="normal">    Adds special features for media files to the Thunar File Manager</tspan></text><text x="2630.3" y="575" font-family="Liberation Mono" font-size="16.667" style="white-space:pre" xml:space="preserve"><tspan fill="#e8e8e8" font-weight="normal">extra/thunar-volman 0.8.1-2 (xfce4) [Installiert]</tspan></text><text x="2630.3" y="594" font-family="Liberation Mono" font-size="16.667" style="white-space:pre" xml:space="preserve"><tspan fill="#e8e8e8" font-weight="normal">    Automatic management of removeable devices in Thunar</tspan></text><text x="2630.3" y="613" font-family="Liberation Mono" font-size="16.667" style="white-space:pre" xml:space="preserve"><tspan fill="#e8e8e8" font-weight="normal">[web@archlinux ~]$ </tspan></text><rect x="2821.0" y="599" width="10" height="18" fill="#ffffff" /><path d="M3333,620 V32 Q3333,26 3339,26 H3831 Q3837,26 3837,32 V620 Z" fill="#000"/><path d="M3333,620 V45 H3837 V620 Z" fill="#1e1e1e"/><path d="M3333.5,45 V32 Q3333.5,27 3338.5,27 H3831.5 Q3836.5,27 3836.5,32 V45 Z" fill="url(#tg)"/><rect x="3333" y="620" width="504" height="2" fill="#000" /><text x="3505" y="46" font-family="Liberation Sans" font-size="13" font-weight="bold" fill="#a4a4ee" letter-spacing="0.6" text-anchor="start" >Erscheinungsbild</text><g transform="translate(3339,30) scale(0.47)"><g transform="rotate(90 6 39)"><rect x="0.5" y="0.5" width="12" height="44" rx="2.5" fill="#f4f4f4" stroke="#9a9a9a" stroke-width="0.8"/><rect x="2.2" y="3.0" width="8.6" height="8" fill="#6a9ad8"/><rect x="2.2" y="12.5" width="8.6" height="8" fill="#2c64b8"/><rect x="2.2" y="22.0" width="8.6" height="8" fill="#1c4890"/></g><g transform="rotate(58 6 39)"><rect x="0.5" y="0.5" width="12" height="44" rx="2.5" fill="#f4f4f4" stroke="#9a9a9a" stroke-width="0.8"/><rect x="2.2" y="3.0" width="8.6" height="8" fill="#c898c8"/><rect x="2.2" y="12.5" width="8.6" height="8" fill="#a070b8"/><rect x="2.2" y="22.0" width="8.6" height="8" fill="#603078"/></g><g transform="rotate(26 6 39)"><rect x="0.5" y="0.5" width="12" height="44" rx="2.5" fill="#f4f4f4" stroke="#9a9a9a" stroke-width="0.8"/><rect x="2.2" y="3.0" width="8.6" height="8" fill="#fca040"/><rect x="2.2" y="12.5" width="8.6" height="8" fill="#f88010"/><rect x="2.2" y="22.0" width="8.6" height="8" fill="#c05000"/></g><g transform="rotate(0 6 39)"><rect x="0.5" y="0.5" width="12" height="44" rx="2.5" fill="#f4f4f4" stroke="#9a9a9a" stroke-width="0.8"/><rect x="2.2" y="3.0" width="8.6" height="8" fill="#f8e040"/><rect x="2.2" y="12.5" width="8.6" height="8" fill="#ecc800"/><rect x="2.2" y="22.0" width="8.6" height="8" fill="#c8a000"/></g><circle cx="6" cy="39" r="2" fill="#ddd" stroke="#777" stroke-width="0.8"/></g><path d="M3780,45 V37 M3776,41 L3780,37 L3784,41" stroke="#6a6a6a" stroke-width="1.8" fill="none"/><rect x="3797.5" y="36.5" width="8" height="8" stroke="#6a6a6a" stroke-width="1.5" fill="none"/><path d="M3819,36 L3828,45 M3828,36 L3819,45" stroke="#6a6a6a" stroke-width="1.8" fill="none"/><rect x="3336" y="54" width="498" height="61" fill="#121212" /><g transform="translate(3345,62) scale(1.0)"><g transform="rotate(90 6 39)"><rect x="0.5" y="0.5" width="12" height="44" rx="2.5" fill="#f4f4f4" stroke="#9a9a9a" stroke-width="0.8"/><rect x="2" y="2.5" width="8" height="5.8" fill="#a8d0f8"/><rect x="2" y="9.1" width="8" height="5.8" fill="#80b0e8"/><rect x="2" y="15.7" width="8" height="5.8" fill="#5090d8"/><rect x="2" y="22.299999999999997" width="8" height="5.8" fill="#2c64b8"/><rect x="2" y="28.9" width="8" height="5.8" fill="#1c4890"/></g><g transform="rotate(58 6 39)"><rect x="0.5" y="0.5" width="12" height="44" rx="2.5" fill="#f4f4f4" stroke="#9a9a9a" stroke-width="0.8"/><rect x="2" y="2.5" width="8" height="5.8" fill="#d8b8e0"/><rect x="2" y="9.1" width="8" height="5.8" fill="#c098d0"/><rect x="2" y="15.7" width="8" height="5.8" fill="#a070b8"/><rect x="2" y="22.299999999999997" width="8" height="5.8" fill="#805098"/><rect x="2" y="28.9" width="8" height="5.8" fill="#603078"/></g><g transform="rotate(26 6 39)"><rect x="0.5" y="0.5" width="12" height="44" rx="2.5" fill="#f4f4f4" stroke="#9a9a9a" stroke-width="0.8"/><rect x="2" y="2.5" width="8" height="5.8" fill="#fcc070"/><rect x="2" y="9.1" width="8" height="5.8" fill="#fca040"/><rect x="2" y="15.7" width="8" height="5.8" fill="#f88010"/><rect x="2" y="22.299999999999997" width="8" height="5.8" fill="#e06000"/><rect x="2" y="28.9" width="8" height="5.8" fill="#c05000"/></g><g transform="rotate(0 6 39)"><rect x="0.5" y="0.5" width="12" height="44" rx="2.5" fill="#f4f4f4" stroke="#9a9a9a" stroke-width="0.8"/><rect x="2" y="2.5" width="8" height="5.8" fill="#fdec90"/><rect x="2" y="9.1" width="8" height="5.8" fill="#f8e040"/><rect x="2" y="15.7" width="8" height="5.8" fill="#ecc800"/><rect x="2" y="22.299999999999997" width="8" height="5.8" fill="#c8a000"/><rect x="2" y="28.9" width="8" height="5.8" fill="#a08000"/></g><circle cx="6" cy="39" r="2" fill="#ddd" stroke="#777" stroke-width="0.8"/></g><text x="3402" y="82" font-family="Liberation Sans" font-size="17" font-weight="bold" fill="#ffffff" letter-spacing="0.5" text-anchor="start" >Erscheinungsbild</text><text x="3402" y="99" font-family="Liberation Sans" font-size="13.33" font-weight="normal" fill="#e6e6e6" letter-spacing="0.56" text-anchor="start" >Das Aussehen des Schreibtischs anpassen</text><rect x="3345.5" y="149.5" width="483" height="417" fill="#232323" stroke="#151515"/><rect x="3345" y="125" width="78" height="25" fill="#232323"/><rect x="3423.5" y="125.5" width="64" height="23" fill="#1a1a1a" stroke="#202020"/><rect x="3488.5" y="125.5" width="65" height="23" fill="#1a1a1a" stroke="#202020"/><rect x="3554.5" y="125.5" width="66" height="23" fill="#1a1a1a" stroke="#202020"/><text x="3349" y="140" font-family="Liberation Sans" font-size="13.33" font-weight="normal" fill="#f0f0f0" letter-spacing="0.62" text-anchor="start" >Oberfläche</text><text x="3427" y="142" font-family="Liberation Sans" font-size="13.33" font-weight="normal" fill="#dddddd" letter-spacing="0.62" text-anchor="start" >Symbole</text><text x="3492" y="142" font-family="Liberation Sans" font-size="13.33" font-weight="normal" fill="#dddddd" letter-spacing="0.62" text-anchor="start" >Schriften</text><text x="3558" y="142" font-family="Liberation Sans" font-size="13.33" font-weight="normal" fill="#dddddd" letter-spacing="0.62" text-anchor="start" >Einstellungen</text><svg x="3358" y="162" width="443" height="392" overflow="hidden"><rect x="0" y="0" width="443" height="392" fill="#121212" /><rect x="2" y="-8" width="15" height="22" fill="#eceef2" /><rect x="17" y="-8" width="14" height="22" fill="#000000" /><rect x="31" y="-8" width="15" height="22" fill="#5083c9" /><text x="50" y="7" font-family="Liberation Sans" font-size="13.33" font-weight="normal" fill="#e6e6e6" letter-spacing="0.66" text-anchor="start" >Xfce-4.2</text><rect x="2" y="18" width="15" height="22" fill="#efefec" /><rect x="17" y="18" width="14" height="22" fill="#111111" /><rect x="31" y="18" width="15" height="22" fill="#d6d8d0" /><text x="50" y="33" font-family="Liberation Sans" font-size="13.33" font-weight="normal" fill="#e6e6e6" letter-spacing="0.66" text-anchor="start" >Xfce-4.4</text><rect x="2" y="44" width="15" height="22" fill="#efefed" /><rect x="17" y="44" width="14" height="22" fill="#121212" /><rect x="31" y="44" width="15" height="22" fill="#dcdad5" /><text x="50" y="59" font-family="Liberation Sans" font-size="13.33" font-weight="normal" fill="#e6e6e6" letter-spacing="0.66" text-anchor="start" >Xfce-4.6</text><rect x="2" y="70" width="15" height="22" fill="#dcdadc" /><rect x="17" y="70" width="14" height="22" fill="#000000" /><rect x="31" y="70" width="15" height="22" fill="#b8b5b8" /><text x="50" y="85" font-family="Liberation Sans" font-size="13.33" font-weight="normal" fill="#e6e6e6" letter-spacing="0.66" text-anchor="start" >Xfce-b5</text><rect x="2" y="96" width="15" height="22" fill="#dcdbd6" /><rect x="17" y="96" width="14" height="22" fill="#000000" /><rect x="31" y="96" width="15" height="22" fill="#4a6481" /><text x="50" y="111" font-family="Liberation Sans" font-size="13.33" font-weight="normal" fill="#e6e6e6" letter-spacing="0.66" text-anchor="start" >Xfce-basic</text><rect x="2" y="122" width="15" height="22" fill="#eeeeee" /><rect x="17" y="122" width="14" height="22" fill="#000000" /><rect x="31" y="122" width="15" height="22" fill="#e0e0ee" /><text x="50" y="137" font-family="Liberation Sans" font-size="13.33" font-weight="normal" fill="#e6e6e6" letter-spacing="0.66" text-anchor="start" >Xfce-cadmium</text><rect x="2" y="148" width="15" height="22" fill="#e8e8e8" /><rect x="17" y="148" width="14" height="22" fill="#000000" /><rect x="31" y="148" width="15" height="22" fill="#4466aa" /><text x="50" y="163" font-family="Liberation Sans" font-size="13.33" font-weight="normal" fill="#e6e6e6" letter-spacing="0.66" text-anchor="start" >Xfce-curve</text><rect x="2" y="174" width="15" height="22" fill="#ece9e3" /><rect x="17" y="174" width="14" height="22" fill="#212121" /><rect x="31" y="174" width="15" height="22" fill="#b2c0d0" /><text x="50" y="189" font-family="Liberation Sans" font-size="13.33" font-weight="normal" fill="#e6e6e6" letter-spacing="0.66" text-anchor="start" >Xfce-dawn</text><rect x="0" y="198" width="443" height="26" fill="#2f4f9b" /><rect x="0.5" y="198.5" width="442" height="25" fill="none" stroke="#3b5db0"/><rect x="2" y="200" width="15" height="22" fill="#2b2828" /><rect x="17" y="200" width="14" height="22" fill="#ffffff" /><rect x="31" y="200" width="15" height="22" fill="#0a2a52" /><text x="50" y="215" font-family="Liberation Sans" font-size="13.33" font-weight="normal" fill="#e6e6e6" letter-spacing="0.66" text-anchor="start" >Xfce-dusk</text><rect x="2" y="226" width="15" height="22" fill="#dcdcde" /><rect x="17" y="226" width="14" height="22" fill="#333333" /><rect x="31" y="226" width="15" height="22" fill="#1f9ccc" /><text x="50" y="241" font-family="Liberation Sans" font-size="13.33" font-weight="normal" fill="#e6e6e6" letter-spacing="0.66" text-anchor="start" >Xfce-flat</text><rect x="2" y="252" width="15" height="22" fill="#dcdcdc" /><rect x="17" y="252" width="14" height="22" fill="#000000" /><rect x="31" y="252" width="15" height="22" fill="#0c5e88" /><text x="50" y="267" font-family="Liberation Sans" font-size="13.33" font-weight="normal" fill="#e6e6e6" letter-spacing="0.66" text-anchor="start" >Xfce-kde2</text><rect x="2" y="278" width="15" height="22" fill="#efeee6" /><rect x="17" y="278" width="14" height="22" fill="#1e1e1e" /><rect x="31" y="278" width="15" height="22" fill="#ffd877" /><text x="50" y="293" font-family="Liberation Sans" font-size="13.33" font-weight="normal" fill="#e6e6e6" letter-spacing="0.66" text-anchor="start" >Xfce-kolors</text><rect x="2" y="304" width="15" height="22" fill="#ededdf" /><rect x="17" y="304" width="14" height="22" fill="#000000" /><rect x="31" y="304" width="15" height="22" fill="#bcb0d0" /><text x="50" y="319" font-family="Liberation Sans" font-size="13.33" font-weight="normal" fill="#e6e6e6" letter-spacing="0.66" text-anchor="start" >Xfce-light</text><rect x="2" y="330" width="15" height="22" fill="#f4f2ee" /><rect x="17" y="330" width="14" height="22" fill="#000000" /><rect x="31" y="330" width="15" height="22" fill="#e2dfd9" /><text x="50" y="345" font-family="Liberation Sans" font-size="13.33" font-weight="normal" fill="#e6e6e6" letter-spacing="0.66" text-anchor="start" >Xfce-orange</text><rect x="2" y="356" width="15" height="22" fill="#efebe0" /><rect x="17" y="356" width="14" height="22" fill="#000000" /><rect x="31" y="356" width="15" height="22" fill="#0054f5" /><text x="50" y="371" font-family="Liberation Sans" font-size="13.33" font-weight="normal" fill="#e6e6e6" letter-spacing="0.66" text-anchor="start" >Xfce-redmondxp</text><rect x="2" y="382" width="15" height="22" fill="#e3e4e0" /><rect x="17" y="382" width="14" height="22" fill="#000000" /><rect x="31" y="382" width="15" height="22" fill="#3a9a3a" /><text x="50" y="397" font-family="Liberation Sans" font-size="13.33" font-weight="normal" fill="#e6e6e6" letter-spacing="0.66" text-anchor="start" >Xfce-saltlake</text></svg><rect x="3805" y="162" width="10" height="392" fill="#1a1a1a" /><rect x="3805" y="162" width="10" height="10" fill="#262626" /><path d="M3807,169 L3810,165 L3813,169 Z" fill="#fff"/><rect x="3805" y="268" width="10" height="223" fill="#262626" rx="1"/><path d="M3807,547 L3810,551 L3813,547 Z" fill="#fff"/><rect x="3344.5" y="581.5" width="101" height="28" rx="2" fill="#272727" stroke="#181818"/><rect x="3727.5" y="581.5" width="102" height="28" rx="2" fill="#272727" stroke="#181818"/><rect x="3369.5" y="585.5" width="17" height="20" fill="#f8f8f8" stroke="#d8d8d8"/><rect x="3372" y="588" width="12" height="1" fill="#b8bcb8" /><rect x="3372" y="590" width="12" height="1" fill="#b8bcb8" /><circle cx="3378" cy="598" r="4.4" stroke="#f0f0f0" stroke-width="3" fill="none"/><circle cx="3378" cy="598" r="4.4" stroke="#d41c1c" stroke-width="3" fill="none" stroke-dasharray="3.456 3.456" stroke-dashoffset="-1.728" transform="rotate(0 3378 598)"/><circle cx="3378" cy="598" r="6" stroke="#9a9a9a" stroke-width="0.6" fill="none"/><circle cx="3378" cy="598" r="2.8" stroke="#9a9a9a" stroke-width="0.6" fill="none"/><text x="3391" y="600" font-family="Liberation Sans" font-size="13.33" font-weight="normal" fill="#f0f0f0" letter-spacing="0.62" text-anchor="start" >Hilfe</text><path d="M3740,591 L3751,602 M3751,591 L3740,602" stroke="#bbb" stroke-width="3"/><text x="3759" y="600" font-family="Liberation Sans" font-size="13.33" font-weight="normal" fill="#f0f0f0" letter-spacing="0.62" text-anchor="start" >Schließen</text><rect x="1921" y="621" width="1916" height="1" fill="#d8d8d8" /><path d="M1921,1080 V628 Q1921,622 1927,622 H3831 Q3837,622 3837,628 V1080 Z" fill="#000"/><path d="M1921,1080 V641 H3837 V1080 Z" fill="#202020"/><path d="M1921.5,641 V628 Q1921.5,623 1926.5,623 H3831.5 Q3836.5,623 3836.5,628 V641 Z" fill="url(#tg)"/><rect x="1926.5" y="629.5" width="19" height="15" fill="#e8e8e8" stroke="#cfcfcf" stroke-width="1"/><rect x="1927.5" y="630.5" width="17" height="12" fill="url(#termicon)" stroke="#050505" stroke-width="0.8"/><path d="M1933.5,632 H1936 L1935,637 H1933 Z M1938,632 H1943 V641 H1935 Z" fill="#7a8a86" opacity="0.35"/><path d="M1930,632.8 L1932,634.2 L1930,635.6" stroke="#fff" stroke-width="0.9" fill="none"/><rect x="1932" y="637" width="2.6" height="1.2" fill="#e0e0e0" /><text x="2752.5" y="642" font-family="Liberation Sans" font-size="13" font-weight="bold" fill="#a4a4ee" letter-spacing="0.62" text-anchor="start" >Terminal - web@archlinux:~</text><path d="M3756,641 V633 M3752,637 L3756,633 L3760,637" stroke="#6a6a6a" stroke-width="1.8" fill="none"/><rect x="3775" y="639" width="6" height="2" fill="#6a6a6a" /><rect x="3796.5" y="632.5" width="8" height="8" stroke="#6a6a6a" stroke-width="1.5" fill="none"/><path d="M3817,632 L3826,641 M3826,632 L3817,641" stroke="#6a6a6a" stroke-width="1.8" fill="none"/><rect x="1923" y="651" width="1914" height="25" fill="#e8e8e7" /><text x="1931.6" y="667.5" font-family="Liberation Sans" font-size="13.33" font-weight="normal" fill="#9a9a9a" letter-spacing="0.62" text-anchor="start" >Datei</text><text x="1982.5" y="667.5" font-family="Liberation Sans" font-size="13.33" font-weight="normal" fill="#9a9a9a" letter-spacing="0.62" text-anchor="start" >Bearbeiten</text><text x="2069.3" y="667.5" font-family="Liberation Sans" font-size="13.33" font-weight="normal" fill="#9a9a9a" letter-spacing="0.62" text-anchor="start" >Ansicht</text><text x="2133" y="667.5" font-family="Liberation Sans" font-size="13.33" font-weight="normal" fill="#9a9a9a" letter-spacing="0.62" text-anchor="start" >Terminal</text><text x="2205" y="667.5" font-family="Liberation Sans" font-size="13.33" font-weight="normal" fill="#9a9a9a" letter-spacing="0.62" text-anchor="start" >Reiter</text><text x="2259" y="667.5" font-family="Liberation Sans" font-size="13.33" font-weight="normal" fill="#9a9a9a" letter-spacing="0.62" text-anchor="start" >Hilfe</text><rect x="1923" y="676" width="1902" height="404" fill="#000" /><rect x="3825" y="676" width="12" height="404" fill="#e6e6e4" /><rect x="3828" y="680" width="6" height="396" fill="#c4c6c4" rx="3"/><text x="1924.3" y="692" font-family="Liberation Mono" font-size="16.667" style="white-space:pre" xml:space="preserve"><tspan fill="#e8e8e8" font-weight="normal">[web@archlinux ~]$ screenfetch</tspan></text><text x="1924.3" y="711" font-family="Liberation Mono" font-size="16.667" style="white-space:pre" xml:space="preserve"><tspan fill="#34e2e2" font-weight="bold">                   -`</tspan></text><text x="1924.3" y="730" font-family="Liberation Mono" font-size="16.667" style="white-space:pre" xml:space="preserve"><tspan fill="#34e2e2" font-weight="bold">                  .o+`</tspan><tspan fill="#e8e8e8" font-weight="normal">                 </tspan><tspan fill="#34e2e2" font-weight="bold">web</tspan><tspan fill="#e8e8e8" font-weight="bold">@</tspan><tspan fill="#34e2e2" font-weight="bold">archlinux</tspan></text><text x="1924.3" y="749" font-family="Liberation Mono" font-size="16.667" style="white-space:pre" xml:space="preserve"><tspan fill="#34e2e2" font-weight="bold">                 `ooo/</tspan><tspan fill="#e8e8e8" font-weight="normal">                 </tspan><tspan fill="#34e2e2" font-weight="bold">OS:</tspan><tspan fill="#e8e8e8" font-weight="normal"> Arch Linux</tspan></text><text x="1924.3" y="768" font-family="Liberation Mono" font-size="16.667" style="white-space:pre" xml:space="preserve"><tspan fill="#34e2e2" font-weight="bold">                `+oooo:</tspan><tspan fill="#e8e8e8" font-weight="normal">                </tspan><tspan fill="#34e2e2" font-weight="bold">Kernel:</tspan><tspan fill="#e8e8e8" font-weight="normal"> x86_64 Linux 4.16.9-1-ARCH</tspan></text><text x="1924.3" y="787" font-family="Liberation Mono" font-size="16.667" style="white-space:pre" xml:space="preserve"><tspan fill="#34e2e2" font-weight="bold">               `+oooooo:</tspan><tspan fill="#e8e8e8" font-weight="normal">               </tspan><tspan fill="#34e2e2" font-weight="bold">Uptime:</tspan><tspan fill="#e8e8e8" font-weight="normal"> 1h 41m</tspan></text><text x="1924.3" y="806" font-family="Liberation Mono" font-size="16.667" style="white-space:pre" xml:space="preserve"><tspan fill="#34e2e2" font-weight="bold">               -+oooooo+:</tspan><tspan fill="#e8e8e8" font-weight="normal">              </tspan><tspan fill="#34e2e2" font-weight="bold">Packages:</tspan><tspan fill="#e8e8e8" font-weight="normal"> 829</tspan></text><text x="1924.3" y="825" font-family="Liberation Mono" font-size="16.667" style="white-space:pre" xml:space="preserve"><tspan fill="#34e2e2" font-weight="bold">             `/:-:++oooo+:</tspan><tspan fill="#e8e8e8" font-weight="normal">             </tspan><tspan fill="#34e2e2" font-weight="bold">Shell:</tspan><tspan fill="#e8e8e8" font-weight="normal"> bash 4.4.23</tspan></text><text x="1924.3" y="844" font-family="Liberation Mono" font-size="16.667" style="white-space:pre" xml:space="preserve"><tspan fill="#34e2e2" font-weight="bold">            `/++++/+++++++:</tspan><tspan fill="#e8e8e8" font-weight="normal">            </tspan><tspan fill="#34e2e2" font-weight="bold">Resolution:</tspan><tspan fill="#e8e8e8" font-weight="normal"> 1920x1080</tspan></text><text x="1924.3" y="863" font-family="Liberation Mono" font-size="16.667" style="white-space:pre" xml:space="preserve"><tspan fill="#34e2e2" font-weight="bold">           `/++++++++++++++:</tspan><tspan fill="#e8e8e8" font-weight="normal">           </tspan><tspan fill="#34e2e2" font-weight="bold">DE:</tspan><tspan fill="#e8e8e8" font-weight="normal"> XFCE4</tspan></text><text x="1924.3" y="882" font-family="Liberation Mono" font-size="16.667" style="white-space:pre" xml:space="preserve"><tspan fill="#34e2e2" font-weight="bold">          `/+++o</tspan><tspan fill="#06989a" font-weight="normal">oooooooo</tspan><tspan fill="#34e2e2" font-weight="bold">oooo/`</tspan><tspan fill="#e8e8e8" font-weight="normal">         </tspan><tspan fill="#34e2e2" font-weight="bold">WM:</tspan><tspan fill="#e8e8e8" font-weight="normal"> Xfwm4</tspan></text><text x="1924.3" y="901" font-family="Liberation Mono" font-size="16.667" style="white-space:pre" xml:space="preserve"><tspan fill="#06989a" font-weight="normal">         </tspan><tspan fill="#34e2e2" font-weight="bold">./</tspan><tspan fill="#06989a" font-weight="normal">ooosssso++osssssso</tspan><tspan fill="#34e2e2" font-weight="bold">+`</tspan><tspan fill="#e8e8e8" font-weight="normal">        </tspan><tspan fill="#34e2e2" font-weight="bold">WM Theme:</tspan><tspan fill="#e8e8e8" font-weight="normal"> Default</tspan></text><text x="1924.3" y="920" font-family="Liberation Mono" font-size="16.667" style="white-space:pre" xml:space="preserve"><tspan fill="#06989a" font-weight="normal">        .oossssso-````/ossssss+`</tspan><tspan fill="#e8e8e8" font-weight="normal">       </tspan><tspan fill="#34e2e2" font-weight="bold">GTK Theme:</tspan><tspan fill="#e8e8e8" font-weight="normal"> Xfce-dusk [GTK2]</tspan></text><text x="1924.3" y="939" font-family="Liberation Mono" font-size="16.667" style="white-space:pre" xml:space="preserve"><tspan fill="#06989a" font-weight="normal">       -osssssso.      :ssssssso.</tspan><tspan fill="#e8e8e8" font-weight="normal">      </tspan><tspan fill="#34e2e2" font-weight="bold">Icon Theme:</tspan><tspan fill="#e8e8e8" font-weight="normal"> gnome</tspan></text><text x="1924.3" y="958" font-family="Liberation Mono" font-size="16.667" style="white-space:pre" xml:space="preserve"><tspan fill="#06989a" font-weight="normal">      :osssssss/        osssso+++.</tspan><tspan fill="#e8e8e8" font-weight="normal">     </tspan><tspan fill="#34e2e2" font-weight="bold">Font:</tspan><tspan fill="#e8e8e8" font-weight="normal"> Sans 10</tspan></text><text x="1924.3" y="977" font-family="Liberation Mono" font-size="16.667" style="white-space:pre" xml:space="preserve"><tspan fill="#06989a" font-weight="normal">     /ossssssss/        +ssssooo/-</tspan><tspan fill="#e8e8e8" font-weight="normal">     </tspan><tspan fill="#34e2e2" font-weight="bold">CPU:</tspan><tspan fill="#e8e8e8" font-weight="normal"> AMD FX-4300 Quad-Core @ 4x 3.8GHz [41.1°C]</tspan></text><text x="1924.3" y="996" font-family="Liberation Mono" font-size="16.667" style="white-space:pre" xml:space="preserve"><tspan fill="#06989a" font-weight="normal">   `/ossssso+/:-        -:/+osssso+-</tspan><tspan fill="#e8e8e8" font-weight="normal">   </tspan><tspan fill="#34e2e2" font-weight="bold">GPU:</tspan><tspan fill="#e8e8e8" font-weight="normal"> AMD Radeon (TM) RX 480 Graphics (POLARIS10, DRM 3.23.0, 4.16.9-1-ARCH, LLVM 6.0.0)</tspan></text><text x="1924.3" y="1015" font-family="Liberation Mono" font-size="16.667" style="white-space:pre" xml:space="preserve"><tspan fill="#06989a" font-weight="normal">  `+sso+:-`                 `.-/+oso:</tspan><tspan fill="#e8e8e8" font-weight="normal">  </tspan><tspan fill="#34e2e2" font-weight="bold">RAM:</tspan><tspan fill="#e8e8e8" font-weight="normal"> 1782MiB / 7937MiB</tspan></text><text x="1924.3" y="1034" font-family="Liberation Mono" font-size="16.667" style="white-space:pre" xml:space="preserve"><tspan fill="#06989a" font-weight="normal"> `++:.                           `-/+/</tspan></text><text x="1924.3" y="1053" font-family="Liberation Mono" font-size="16.667" style="white-space:pre" xml:space="preserve"><tspan fill="#06989a" font-weight="normal"> .`                                 `/</tspan></text><text x="1924.3" y="1072" font-family="Liberation Mono" font-size="16.667" style="white-space:pre" xml:space="preserve"><tspan fill="#e8e8e8" font-weight="normal">[web@archlinux ~]$ </tspan></text><rect x="2115.5" y="1058.5" width="10" height="18" fill="none" stroke="#fff"/><rect x="1917" y="0" width="3" height="1080" fill="#000" /><rect x="3837" y="0" width="3" height="1080" fill="#000" /></svg></body></html>
